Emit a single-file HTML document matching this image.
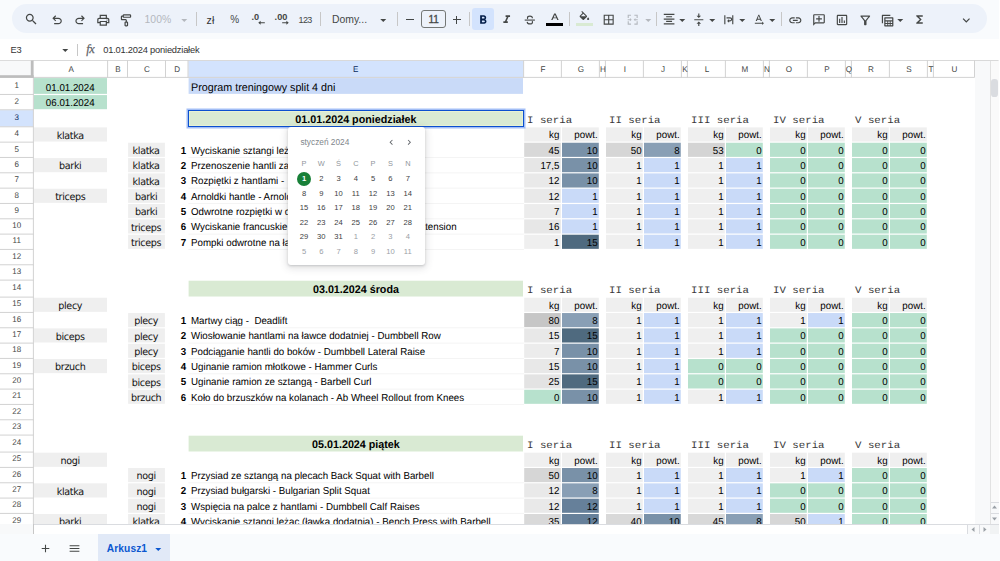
<!DOCTYPE html>
<html lang="pl"><head><meta charset="utf-8"><title>Program treningowy</title>
<style>
html,body{margin:0;padding:0}
body{width:1000px;height:561px;overflow:hidden;position:relative;background:#f9fbfd;font-family:"Liberation Sans",sans-serif;color:#000}
.abs{position:absolute}
.t{position:absolute;white-space:nowrap;overflow:visible;font-size:9.76px;color:#000;transform:skewX(0.05deg) scaleY(1.03);transform-origin:50% 78.9%}
.c{text-align:center}.r{text-align:right}.b{font-weight:bold}
.cm{font-family:"DejaVu Sans","Liberation Sans",sans-serif;font-size:9.6px;color:#111;letter-spacing:-0.35px}
.big{font-size:10.74px}
.hd{font-size:10.74px;font-weight:bold}
.mono{font-family:"Liberation Mono",monospace;font-size:10.74px;color:#3a3a3a;transform:skewX(0.05deg) scaleY(0.93);transform-origin:50% 78.9%}
.ch{font-size:8.1px;color:#444746;text-align:center}
.rh{font-size:8.0px;color:#444746;text-align:center}
.sel{color:#0b2a5c}
.gridsvg{position:absolute;left:0;top:0}
.ic{position:absolute}
#grid{position:absolute;left:0;top:0;width:1000px;height:524.4px;overflow:hidden}
#gridbg{position:absolute;left:0;top:60.5px;width:998.6px;height:464px;background:#fff}
.sep{position:absolute;width:1px;background:#c7c7c7;top:12px;height:14px}
.tb{position:absolute;font-size:10.2px;color:#444746;white-space:nowrap;line-height:14px;height:14px}
.cal{position:absolute;font-size:7.6px;text-align:center;width:18px;height:12px;line-height:12px;color:#3c4043}
</style></head><body>
<div class="abs" style="left:11.5px;top:4.2px;width:975.3px;height:29.2px;border-radius:14.6px;background:#edf2fa"></div>
<svg class="ic" style="left:23.70px;top:12.30px" width="14.60" height="14.60" viewBox="0 0 24 24" fill="#444746" color="#444746" ><path d="M15.5 14h-.79l-.28-.27C15.41 12.59 16 11.11 16 9.5 16 5.91 13.09 3 9.5 3S3 5.91 3 9.5 5.91 16 9.5 16c1.61 0 3.09-.59 4.23-1.57l.27.28v.79l5 4.99L20.49 19l-4.99-5zm-6 0C7.01 14 5 11.99 5 9.5S7.01 5 9.5 5 14 7.01 14 9.5 11.99 14 9.5 14z"/></svg>
<svg class="ic" style="left:49.50px;top:13.20px" width="14.20" height="14.20" viewBox="0 0 24 24" fill="#444746" color="#444746" ><path d="M7 19v-2h7.1q1.575 0 2.737-1Q18 15 18 13.5T16.837 11Q15.675 10 14.1 10H7.8l2.6 2.6L9 14 4 9l5-5 1.4 1.4L7.8 8h6.3q2.425 0 4.163 1.575Q20 11.15 20 13.5q0 2.350-1.737 3.925Q16.525 19 14.1 19Z"/></svg>
<svg class="ic" style="left:72.50px;top:13.20px" width="14.20" height="14.20" viewBox="0 0 24 24" fill="#444746" color="#444746" ><path d="M9.9 19q-2.425 0-4.163-1.575Q4 15.85 4 13.5q0-2.35 1.737-3.925Q7.475 8 9.9 8h6.3l-2.6-2.6L15 4l5 5-5 5-1.4-1.4 2.6-2.6H9.9q-1.575 0-2.738 1Q6 12 6 13.5T7.162 16q1.163 1 2.738 1H17v2Z"/></svg>
<svg class="ic" style="left:95.70px;top:12.50px" width="14.60" height="14.60" viewBox="0 0 24 24" fill="#444746" color="#444746" ><path d="M19 8h-1V3H6v5H5c-1.66 0-3 1.34-3 3v6h4v4h12v-4h4v-6c0-1.66-1.34-3-3-3zM8 5h8v3H8V5zm8 12v2H8v-4h8v2zm2-2v-2H6v2H4v-4c0-.55.45-1 1-1h14c.55 0 1 .45 1 1v4h-2z"/><circle cx="18" cy="11.5" r="1"/></svg>
<svg class="ic" style="left:118.70px;top:12.50px" width="14.60" height="14.60" viewBox="0 0 24 24" fill="#444746" color="#444746" ><g transform="translate(24,0) scale(-1,1)"><path d="M11 22q-.825 0-1.412-.587Q9 20.825 9 20v-4q0-.825.588-1.413Q10.175 14 11 14v-2q0-.825.588-1.412Q12.175 10 13 10h6V6h-1q0 .825-.587 1.413Q16.825 8 16 8H6q-.825 0-1.412-.587Q4 6.825 4 6V4q0-.825.588-1.413Q5.175 2 6 2h10q.825 0 1.413.587Q18 3.175 18 4h1q.825 0 1.413.588Q21 5.175 21 6v4q0 .825-.587 1.412Q19.825 12 19 12h-6v2q.825 0 1.413.587Q15 15.175 15 16v4q0 .825-.587 1.413Q13.825 22 13 22ZM6 6h10V4H6v2Zm5 14h2v-4h-2v4Z"/></g></svg>
<div class="tb" style="left:144.6px;top:13.2px;color:#b4b8be;font-size:10.4px">100%</div>
<svg class="ic" style="left:176.95px;top:12.55px" width="14.50" height="14.50" viewBox="0 0 24 24" fill="#b4b8be" color="#b4b8be" ><path d="M7 10l5 5 5-5z"/></svg>
<div class="sep" style="left:196.4px"></div>
<div class="tb" style="left:206.6px;top:12.8px;font-size:10.6px;color:#333">zł</div>
<div class="tb" style="left:230.3px;top:12.9px;font-size:10px">%</div>
<div class="tb" style="left:251.4px;top:10.2px;font-size:9.2px;font-weight:bold">.0</div>
<svg class="ic" style="left:257.5px;top:20.2px" width="7" height="5.5" viewBox="0 0 8 6"><path d="M0.3 3 L3 0.6 V2.400 H7.800 V3.600 H3 V5.400 Z" fill="#444746"/></svg>
<div class="tb" style="left:274.6px;top:10.2px;font-size:9.2px;font-weight:bold">.00</div>
<svg class="ic" style="left:281.5px;top:20.2px" width="7" height="5.5" viewBox="0 0 8 6"><path d="M7.700 3 L5 0.6 V2.400 H0.2 V3.600 H5 V5.400 Z" fill="#444746"/></svg>
<div class="tb" style="left:298.6px;top:13px;font-size:9px;letter-spacing:-0.65px">123</div>
<div class="sep" style="left:320px"></div>
<div class="tb" style="left:332px;top:12.9px;font-size:10.4px">Domy...</div>
<svg class="ic" style="left:376.45px;top:12.55px" width="14.50" height="14.50" viewBox="0 0 24 24" fill="#444746" color="#444746" ><path d="M7 10l5 5 5-5z"/></svg>
<div class="sep" style="left:397.4px"></div>
<div class="abs" style="left:406.3px;top:19.1px;width:7.4px;height:1.25px;background:#444746"></div>
<div class="abs" style="left:421.3px;top:10.3px;width:23px;height:16px;border:0.8px solid #747775;border-radius:3px;box-sizing:content-box"></div>
<div class="tb" style="left:421.2px;width:25px;text-align:center;top:12.9px;font-size:10px;-webkit-text-stroke:0.3px #444746">11</div>
<div class="abs" style="left:452.7px;top:19.1px;width:8.2px;height:1.25px;background:#444746"></div>
<div class="abs" style="left:456.05px;top:15.7px;width:1.25px;height:8.3px;background:#444746"></div>
<div class="sep" style="left:468.6px"></div>
<div class="abs" style="left:472.2px;top:7.8px;width:21.8px;height:21.9px;border-radius:3px;background:#d3e3fd"></div>
<svg class="ic" style="left:475.90px;top:12.70px" width="14.20" height="14.20" viewBox="0 0 24 24" fill="#041e49" color="#041e49" ><path d="M15.6 10.79c.97-.67 1.65-1.77 1.65-2.79 0-2.26-1.75-4-4-4H7v14h7.04c2.09 0 3.71-1.7 3.71-3.79 0-1.52-.86-2.82-2.15-3.42zM10 6.5h3c.83 0 1.5.67 1.5 1.5s-.67 1.5-1.5 1.5h-3v-3zm3.5 9H10v-3h3.500c.83 0 1.5.67 1.5 1.5s-.67 1.5-1.5 1.5z"/></svg>
<svg class="ic" style="left:499.80px;top:13.10px" width="13.40" height="13.40" viewBox="0 0 24 24" fill="#444746" color="#444746" ><path d="M10 4v3h2.21l-3.42 8H6v3h8v-3h-2.21l3.42-8H18V4z"/></svg>
<svg class="ic" style="left:523.00px;top:13.00px" width="13.60" height="13.60" viewBox="0 0 24 24" fill="#444746" color="#444746" ><g fill="none" stroke="currentColor" stroke-width="2"><path d="M3 12.500H21"/><path d="M16.600 9.200C16.600 6.900 14.900 5.600 12.200 5.600 9.500 5.600 7.900 6.900 7.900 8.700 7.900 9.400 8.100 9.900 8.500 10.400"/><path d="M7.400 15.600C7.600 17.900 9.400 19.300 12.200 19.300 15 19.300 16.700 18 16.700 16.200 16.700 15.500 16.500 15 16.100 14.500"/></g></svg>
<svg class="ic" style="left:547.60px;top:12.30px" width="13.80" height="11.40" viewBox="0 0 24 24" fill="#444746" color="#444746" preserveAspectRatio="none" ><path d="M5.49 17h2.42l1.27-3.58h5.65L16.090 17h2.42L13.25 3h-2.5L5.49 17zm4.42-5.61l2.03-5.79h.12l2.03 5.79H9.91z"/></svg>
<div class="abs" style="left:545.8px;top:23.2px;width:17.2px;height:2.7px;background:#000"></div>
<div class="sep" style="left:568.6px"></div>
<svg class="ic" style="left:578.20px;top:11.20px" width="12.80" height="12.80" viewBox="0 0 24 24" fill="#444746" color="#444746" ><path d="M16.56 8.94L7.62 0 6.21 1.41l2.38 2.38-5.15 5.15c-.59.59-.59 1.54 0 2.12l5.5 5.5c.29.29.68.44 1.06.44s.77-.15 1.060-.44l5.5-5.5c.59-.58.59-1.53 0-2.12zM5.21 10L10 5.21 14.79 10H5.21zM19 11.5s-2 2.17-2 3.5c0 1.1.9 2 2 2s2-.9 2-2c0-1.33-2-3.5-2-3.500z"/></svg>
<div class="abs" style="left:575.8px;top:23.2px;width:17px;height:2.7px;background:#d9ead3"></div>
<svg class="ic" style="left:602.10px;top:13.10px" width="13.40" height="13.40" viewBox="0 0 24 24" fill="#444746" color="#444746" ><path d="M3 3v18h18V3H3zm8 16H5v-6h6v6zm0-8H5V5h6v6zm8 8h-6v-6h6v6zm0-8h-6V5h6v6z"/></svg>
<svg class="ic" style="left:626.30px;top:13.10px" width="13.40" height="13.40" viewBox="0 0 24 24" fill="#b4b8be" color="#b4b8be" ><path d="M3 3h6v2H5v4H3V3zm12 0h6v6h-2V5h-4V3zM3 15h2v4h4v2H3v-6zm16 0h2v6h-6v-2h4v-4zM3 11h4.200V9l3 3-3 3v-2H3v-2zm18 0h-4.200V9l-3 3 3 3v-2H21v-2z"/></svg>
<svg class="ic" style="left:640.95px;top:12.55px" width="14.50" height="14.50" viewBox="0 0 24 24" fill="#b4b8be" color="#b4b8be" ><path d="M7 10l5 5 5-5z"/></svg>
<div class="sep" style="left:655.6px"></div>
<svg class="ic" style="left:661.80px;top:12.40px" width="14.20" height="14.20" viewBox="0 0 24 24" fill="#444746" color="#444746" ><path d="M7 15v2h10v-2H7zm-4 6h18v-2H3v2zm0-8h18v-2H3v2zm4-6v2h10V7H7zM3 3v2h18V3H3z"/></svg>
<svg class="ic" style="left:674.55px;top:12.55px" width="14.50" height="14.50" viewBox="0 0 24 24" fill="#444746" color="#444746" ><path d="M7 10l5 5 5-5z"/></svg>
<svg class="ic" style="left:691.60px;top:13.00px" width="13.60" height="13.60" viewBox="0 0 24 24" fill="#444746" color="#444746" ><path d="M8 19h3v4h2v-4h3l-4-4-4 4zm8-14h-3V1h-2v4H8l4 4 4-4zM4 11v2h16v-2H4z"/></svg>
<svg class="ic" style="left:704.55px;top:12.55px" width="14.50" height="14.50" viewBox="0 0 24 24" fill="#444746" color="#444746" ><path d="M7 10l5 5 5-5z"/></svg>
<svg class="ic" style="left:721.90px;top:13.00px" width="13.60" height="13.60" viewBox="0 0 24 24" fill="#444746" color="#444746" ><path d="M4 4h2v16H4zM18 4h2v16h-2zM8 7.500h6.250a3.750 3.750 0 0 1 0 7.500H12.500v2.200l-3.400-3.200 3.400-3.200V13h1.750a1.750 1.750 0 0 0 0-3.500H8z"/></svg>
<svg class="ic" style="left:734.55px;top:12.55px" width="14.50" height="14.50" viewBox="0 0 24 24" fill="#444746" color="#444746" ><path d="M7 10l5 5 5-5z"/></svg>
<svg class="ic" style="left:751.90px;top:13.00px" width="13.60" height="13.60" viewBox="0 0 24 24" fill="#444746" color="#444746" ><path d="M21 18l-3-3v2H5v2h13v2l3-3zM9.5 11.8h5l.9 2.2h2.1L12.75 3h-1.500L6.5 14h2.100l.9-2.200zM12 4.980L13.870 10h-3.740L12 4.980z"/></svg>
<svg class="ic" style="left:764.75px;top:12.55px" width="14.50" height="14.50" viewBox="0 0 24 24" fill="#444746" color="#444746" ><path d="M7 10l5 5 5-5z"/></svg>
<div class="sep" style="left:780.6px"></div>
<svg class="ic" style="left:787.70px;top:12.50px" width="14.60" height="14.60" viewBox="0 0 24 24" fill="#444746" color="#444746" ><path d="M3.900 12c0-1.710 1.390-3.100 3.100-3.100h4V7H7c-2.760 0-5 2.240-5 5s2.240 5 5 5h4v-1.900H7c-1.710 0-3.100-1.390-3.100-3.100zM8 13h8v-2H8v2zm9-6h-4v1.900h4c1.710 0 3.100 1.390 3.100 3.100s-1.390 3.100-3.100 3.100h-4V17h4c2.760 0 5-2.240 5-5s-2.240-5-5-5z"/></svg>
<svg class="ic" style="left:811.70px;top:13.20px" width="14.00" height="14.00" viewBox="0 0 24 24" fill="#444746" color="#444746" ><g transform="translate(24,0) scale(-1,1)"><path d="M22 4c0-1.100-.9-2-2-2H4c-1.100 0-2 .9-2 2v12c0 1.100.9 2 2 2h14l4 4V4zm-2 13.170L18.830 16H4V4h16v13.170zM13 5h-2v4H7v2h4v4h2v-4h4V9h-4z"/></g></svg>
<svg class="ic" style="left:835.20px;top:12.80px" width="14.00" height="14.00" viewBox="0 0 24 24" fill="#444746" color="#444746" ><path d="M9 17H7v-7h2v7zm4 0h-2V7h2v10zm4 0h-2v-4h2v4zm2 2H5V5h14v14zm0-16H5c-1.100 0-2 .9-2 2v14c0 1.100.9 2 2 2h14c1.100 0 2-.9 2-2V5c0-1.100-.9-2-2-2z"/></svg>
<svg class="ic" style="left:858.00px;top:12.50px" width="14.60" height="14.60" viewBox="0 0 24 24" fill="#444746" color="#444746" ><path d="M7 6h10l-5.010 6.300L7 6zm-2.750-.39C6.270 8.200 10 13 10 13v6c0 .55.45 1 1 1h2c.55 0 1-.45 1-1v-6s3.720-4.800 5.740-7.390A.998.998 0 0 0 18.950 4H5.040c-.83 0-1.300.95-.79 1.610z"/></svg>
<svg class="ic" style="left:879.90px;top:12.50px" width="14.60" height="14.60" viewBox="0 0 24 24" fill="#444746" color="#444746" ><path d="M8 7h13c.55 0 1 .45 1 1v13c0 .55-.45 1-1 1H8c-.55 0-1-.45-1-1V8c0-.55.45-1 1-1zm1 2v3h11V9H9zm0 5v2.500h3V14H9zm4.500 0v2.500h2.500V14h-2.500zm4 0v2.500H20V14h-2.500zM9 18v2h3v-2H9zm4.500 0v2h2.500v-2h-2.500zm4 0v2H20v-2h-2.500z"/><path d="M4 3h13v2H5v12H3V4c0-.55.45-1 1-1z"/></svg>
<svg class="ic" style="left:893.25px;top:12.55px" width="14.50" height="14.50" viewBox="0 0 24 24" fill="#444746" color="#444746" ><path d="M7 10l5 5 5-5z"/></svg>
<svg class="ic" style="left:913.00px;top:13.30px" width="13.00" height="13.00" viewBox="0 0 24 24" fill="#444746" color="#444746" ><path d="M18 4H6v2l6.500 6L6 18v2h12v-3h-7l5-5-5-5h7z"/></svg>
<svg class="ic" style="left:958.90px;top:12.50px" width="14.60" height="14.60" viewBox="0 0 24 24" fill="#444746" color="#444746" ><path d="M16.590 8.590L12 13.170 7.410 8.590 6 10l6 6 6-6z"/></svg>
<div class="abs" style="left:0;top:39.4px;width:1000px;height:21.2px;background:#fff"></div>
<div class="tb" style="left:10.4px;top:42.8px;font-size:9.3px;color:#333">E3</div>
<svg class="ic" style="left:58.35px;top:42.55px" width="14.50" height="14.50" viewBox="0 0 24 24" fill="#444746" color="#444746" ><path d="M7 10l5 5 5-5z"/></svg>
<div class="abs" style="left:77.2px;top:44px;width:1px;height:12px;background:#c7c7c7"></div>
<div class="tb" style="left:86.2px;top:42.4px;font-size:12.4px;font-style:italic;font-family:'Liberation Serif',serif;color:#5f6368;letter-spacing:-0.5px;-webkit-text-stroke:0.25px #5f6368">fx</div>
<div class="tb" style="left:103.2px;top:42.8px;font-size:9.3px;color:#333;letter-spacing:-0.2px">01.01.2024 poniedziałek</div>
<div id="gridbg"></div>
<div id="grid">
<svg class="gridsvg" width="1000" height="561" viewBox="0 0 1000 561"><rect x="34.00" y="78.08" width="73.00" height="15.80" fill="#b7e1cd" /><rect x="34.00" y="95.08" width="73.00" height="14.13" fill="#b7e1cd" /><rect x="188.60" y="78.08" width="334.40" height="15.80" fill="#c9daf8" /><rect x="188.60" y="110.41" width="334.40" height="15.80" fill="#d9ead3" /><rect x="188.60" y="280.71" width="334.40" height="15.80" fill="#d9ead3" /><rect x="188.60" y="435.69" width="334.40" height="15.80" fill="#d9ead3" /><rect x="34.00" y="127.41" width="73.00" height="14.13" fill="#efefef" /><rect x="34.00" y="158.07" width="73.00" height="14.13" fill="#efefef" /><rect x="34.00" y="188.73" width="73.00" height="14.13" fill="#efefef" /><rect x="34.00" y="297.72" width="73.00" height="14.13" fill="#efefef" /><rect x="34.00" y="328.38" width="73.00" height="14.13" fill="#efefef" /><rect x="34.00" y="359.04" width="73.00" height="14.13" fill="#efefef" /><rect x="34.00" y="452.69" width="73.00" height="14.13" fill="#efefef" /><rect x="34.00" y="483.35" width="73.00" height="14.13" fill="#efefef" /><rect x="34.00" y="514.01" width="73.00" height="14.13" fill="#efefef" /><rect x="128.10" y="142.74" width="36.80" height="14.13" fill="#efefef" /><rect x="128.10" y="158.07" width="36.80" height="14.13" fill="#efefef" /><rect x="128.10" y="173.40" width="36.80" height="14.13" fill="#efefef" /><rect x="128.10" y="188.73" width="36.80" height="14.13" fill="#efefef" /><rect x="128.10" y="204.06" width="36.80" height="14.13" fill="#efefef" /><rect x="128.10" y="219.39" width="36.80" height="14.13" fill="#efefef" /><rect x="128.10" y="234.72" width="36.80" height="14.13" fill="#efefef" /><rect x="128.10" y="313.05" width="36.80" height="14.13" fill="#efefef" /><rect x="128.10" y="328.38" width="36.80" height="14.13" fill="#efefef" /><rect x="128.10" y="343.71" width="36.80" height="14.13" fill="#efefef" /><rect x="128.10" y="359.04" width="36.80" height="14.13" fill="#efefef" /><rect x="128.10" y="374.37" width="36.80" height="14.13" fill="#efefef" /><rect x="128.10" y="389.70" width="36.80" height="14.13" fill="#efefef" /><rect x="128.10" y="468.02" width="36.80" height="14.13" fill="#efefef" /><rect x="128.10" y="483.35" width="36.80" height="14.13" fill="#efefef" /><rect x="128.10" y="498.68" width="36.80" height="14.13" fill="#efefef" /><rect x="128.10" y="514.01" width="36.80" height="14.13" fill="#efefef" /><line x1="188.37" y1="157.47" x2="523.97" y2="157.47" stroke="#f1f1f1" stroke-width="0.8"/><line x1="188.37" y1="172.80" x2="523.97" y2="172.80" stroke="#f1f1f1" stroke-width="0.8"/><line x1="188.37" y1="188.13" x2="523.97" y2="188.13" stroke="#f1f1f1" stroke-width="0.8"/><line x1="188.37" y1="203.46" x2="523.97" y2="203.46" stroke="#f1f1f1" stroke-width="0.8"/><line x1="188.37" y1="218.79" x2="523.97" y2="218.79" stroke="#f1f1f1" stroke-width="0.8"/><line x1="188.37" y1="234.12" x2="523.97" y2="234.12" stroke="#f1f1f1" stroke-width="0.8"/><line x1="188.37" y1="249.45" x2="523.97" y2="249.45" stroke="#f1f1f1" stroke-width="0.8"/><line x1="188.37" y1="327.78" x2="523.97" y2="327.78" stroke="#f1f1f1" stroke-width="0.8"/><line x1="188.37" y1="343.11" x2="523.97" y2="343.11" stroke="#f1f1f1" stroke-width="0.8"/><line x1="188.37" y1="358.44" x2="523.97" y2="358.44" stroke="#f1f1f1" stroke-width="0.8"/><line x1="188.37" y1="373.77" x2="523.97" y2="373.77" stroke="#f1f1f1" stroke-width="0.8"/><line x1="188.37" y1="389.10" x2="523.97" y2="389.10" stroke="#f1f1f1" stroke-width="0.8"/><line x1="188.37" y1="404.43" x2="523.97" y2="404.43" stroke="#f1f1f1" stroke-width="0.8"/><line x1="188.37" y1="482.75" x2="523.97" y2="482.75" stroke="#f1f1f1" stroke-width="0.8"/><line x1="188.37" y1="498.08" x2="523.97" y2="498.08" stroke="#f1f1f1" stroke-width="0.8"/><line x1="188.37" y1="513.41" x2="523.97" y2="513.41" stroke="#f1f1f1" stroke-width="0.8"/><line x1="188.37" y1="528.74" x2="523.97" y2="528.74" stroke="#f1f1f1" stroke-width="0.8"/><rect x="524.20" y="127.41" width="36.60" height="14.13" fill="#efefef" /><rect x="562.00" y="127.41" width="36.80" height="14.13" fill="#efefef" /><rect x="606.00" y="127.41" width="36.80" height="14.13" fill="#efefef" /><rect x="644.00" y="127.41" width="36.80" height="14.13" fill="#efefef" /><rect x="688.00" y="127.41" width="36.80" height="14.13" fill="#efefef" /><rect x="726.00" y="127.41" width="36.80" height="14.13" fill="#efefef" /><rect x="770.00" y="127.41" width="36.80" height="14.13" fill="#efefef" /><rect x="808.00" y="127.41" width="36.80" height="14.13" fill="#efefef" /><rect x="852.00" y="127.41" width="36.80" height="14.13" fill="#efefef" /><rect x="890.00" y="127.41" width="36.80" height="14.13" fill="#efefef" /><rect x="524.20" y="297.72" width="36.60" height="14.13" fill="#efefef" /><rect x="562.00" y="297.72" width="36.80" height="14.13" fill="#efefef" /><rect x="606.00" y="297.72" width="36.80" height="14.13" fill="#efefef" /><rect x="644.00" y="297.72" width="36.80" height="14.13" fill="#efefef" /><rect x="688.00" y="297.72" width="36.80" height="14.13" fill="#efefef" /><rect x="726.00" y="297.72" width="36.80" height="14.13" fill="#efefef" /><rect x="770.00" y="297.72" width="36.80" height="14.13" fill="#efefef" /><rect x="808.00" y="297.72" width="36.80" height="14.13" fill="#efefef" /><rect x="852.00" y="297.72" width="36.80" height="14.13" fill="#efefef" /><rect x="890.00" y="297.72" width="36.80" height="14.13" fill="#efefef" /><rect x="524.20" y="452.69" width="36.60" height="14.13" fill="#efefef" /><rect x="562.00" y="452.69" width="36.80" height="14.13" fill="#efefef" /><rect x="606.00" y="452.69" width="36.80" height="14.13" fill="#efefef" /><rect x="644.00" y="452.69" width="36.80" height="14.13" fill="#efefef" /><rect x="688.00" y="452.69" width="36.80" height="14.13" fill="#efefef" /><rect x="726.00" y="452.69" width="36.80" height="14.13" fill="#efefef" /><rect x="770.00" y="452.69" width="36.80" height="14.13" fill="#efefef" /><rect x="808.00" y="452.69" width="36.80" height="14.13" fill="#efefef" /><rect x="852.00" y="452.69" width="36.80" height="14.13" fill="#efefef" /><rect x="890.00" y="452.69" width="36.80" height="14.13" fill="#efefef" /><rect x="524.20" y="142.74" width="36.60" height="14.13" fill="#d8d8d8" /><rect x="562.00" y="142.74" width="36.80" height="14.13" fill="#7991a8" /><rect x="606.00" y="142.74" width="36.80" height="14.13" fill="#d6d6d6" /><rect x="644.00" y="142.74" width="36.80" height="14.13" fill="#899fb5" /><rect x="688.00" y="142.74" width="36.80" height="14.13" fill="#d4d4d4" /><rect x="726.00" y="142.74" width="36.80" height="14.13" fill="#b7e1cd" /><rect x="770.00" y="142.74" width="36.80" height="14.13" fill="#b7e1cd" /><rect x="808.00" y="142.74" width="36.80" height="14.13" fill="#b7e1cd" /><rect x="852.00" y="142.74" width="36.80" height="14.13" fill="#b7e1cd" /><rect x="890.00" y="142.74" width="36.80" height="14.13" fill="#b7e1cd" /><rect x="524.20" y="158.07" width="36.60" height="14.13" fill="#e6e6e6" /><rect x="562.00" y="158.07" width="36.80" height="14.13" fill="#7991a8" /><rect x="606.00" y="158.07" width="36.80" height="14.13" fill="#efefef" /><rect x="644.00" y="158.07" width="36.80" height="14.13" fill="#c9daf8" /><rect x="688.00" y="158.07" width="36.80" height="14.13" fill="#efefef" /><rect x="726.00" y="158.07" width="36.80" height="14.13" fill="#c9daf8" /><rect x="770.00" y="158.07" width="36.80" height="14.13" fill="#b7e1cd" /><rect x="808.00" y="158.07" width="36.80" height="14.13" fill="#b7e1cd" /><rect x="852.00" y="158.07" width="36.80" height="14.13" fill="#b7e1cd" /><rect x="890.00" y="158.07" width="36.80" height="14.13" fill="#b7e1cd" /><rect x="524.20" y="173.40" width="36.60" height="14.13" fill="#e9e9e9" /><rect x="562.00" y="173.40" width="36.80" height="14.13" fill="#7991a8" /><rect x="606.00" y="173.40" width="36.80" height="14.13" fill="#efefef" /><rect x="644.00" y="173.40" width="36.80" height="14.13" fill="#c9daf8" /><rect x="688.00" y="173.40" width="36.80" height="14.13" fill="#efefef" /><rect x="726.00" y="173.40" width="36.80" height="14.13" fill="#c9daf8" /><rect x="770.00" y="173.40" width="36.80" height="14.13" fill="#b7e1cd" /><rect x="808.00" y="173.40" width="36.80" height="14.13" fill="#b7e1cd" /><rect x="852.00" y="173.40" width="36.80" height="14.13" fill="#b7e1cd" /><rect x="890.00" y="173.40" width="36.80" height="14.13" fill="#b7e1cd" /><rect x="524.20" y="188.73" width="36.60" height="14.13" fill="#e9e9e9" /><rect x="562.00" y="188.73" width="36.80" height="14.13" fill="#c9daf8" /><rect x="606.00" y="188.73" width="36.80" height="14.13" fill="#efefef" /><rect x="644.00" y="188.73" width="36.80" height="14.13" fill="#c9daf8" /><rect x="688.00" y="188.73" width="36.80" height="14.13" fill="#efefef" /><rect x="726.00" y="188.73" width="36.80" height="14.13" fill="#c9daf8" /><rect x="770.00" y="188.73" width="36.80" height="14.13" fill="#b7e1cd" /><rect x="808.00" y="188.73" width="36.80" height="14.13" fill="#b7e1cd" /><rect x="852.00" y="188.73" width="36.80" height="14.13" fill="#b7e1cd" /><rect x="890.00" y="188.73" width="36.80" height="14.13" fill="#b7e1cd" /><rect x="524.20" y="204.06" width="36.60" height="14.13" fill="#ececec" /><rect x="562.00" y="204.06" width="36.80" height="14.13" fill="#c9daf8" /><rect x="606.00" y="204.06" width="36.80" height="14.13" fill="#efefef" /><rect x="644.00" y="204.06" width="36.80" height="14.13" fill="#c9daf8" /><rect x="688.00" y="204.06" width="36.80" height="14.13" fill="#efefef" /><rect x="726.00" y="204.06" width="36.80" height="14.13" fill="#c9daf8" /><rect x="770.00" y="204.06" width="36.80" height="14.13" fill="#b7e1cd" /><rect x="808.00" y="204.06" width="36.80" height="14.13" fill="#b7e1cd" /><rect x="852.00" y="204.06" width="36.80" height="14.13" fill="#b7e1cd" /><rect x="890.00" y="204.06" width="36.80" height="14.13" fill="#b7e1cd" /><rect x="524.20" y="219.39" width="36.60" height="14.13" fill="#e7e7e7" /><rect x="562.00" y="219.39" width="36.80" height="14.13" fill="#c9daf8" /><rect x="606.00" y="219.39" width="36.80" height="14.13" fill="#efefef" /><rect x="644.00" y="219.39" width="36.80" height="14.13" fill="#c9daf8" /><rect x="688.00" y="219.39" width="36.80" height="14.13" fill="#efefef" /><rect x="726.00" y="219.39" width="36.80" height="14.13" fill="#c9daf8" /><rect x="770.00" y="219.39" width="36.80" height="14.13" fill="#b7e1cd" /><rect x="808.00" y="219.39" width="36.80" height="14.13" fill="#b7e1cd" /><rect x="852.00" y="219.39" width="36.80" height="14.13" fill="#b7e1cd" /><rect x="890.00" y="219.39" width="36.80" height="14.13" fill="#b7e1cd" /><rect x="524.20" y="234.72" width="36.60" height="14.13" fill="#efefef" /><rect x="562.00" y="234.72" width="36.80" height="14.13" fill="#4f6a7f" /><rect x="606.00" y="234.72" width="36.80" height="14.13" fill="#efefef" /><rect x="644.00" y="234.72" width="36.80" height="14.13" fill="#c9daf8" /><rect x="688.00" y="234.72" width="36.80" height="14.13" fill="#efefef" /><rect x="726.00" y="234.72" width="36.80" height="14.13" fill="#c9daf8" /><rect x="770.00" y="234.72" width="36.80" height="14.13" fill="#b7e1cd" /><rect x="808.00" y="234.72" width="36.80" height="14.13" fill="#b7e1cd" /><rect x="852.00" y="234.72" width="36.80" height="14.13" fill="#b7e1cd" /><rect x="890.00" y="234.72" width="36.80" height="14.13" fill="#b7e1cd" /><rect x="524.20" y="313.05" width="36.60" height="14.13" fill="#c6c6c6" /><rect x="562.00" y="313.05" width="36.80" height="14.13" fill="#899fb5" /><rect x="606.00" y="313.05" width="36.80" height="14.13" fill="#efefef" /><rect x="644.00" y="313.05" width="36.80" height="14.13" fill="#c9daf8" /><rect x="688.00" y="313.05" width="36.80" height="14.13" fill="#efefef" /><rect x="726.00" y="313.05" width="36.80" height="14.13" fill="#c9daf8" /><rect x="770.00" y="313.05" width="36.80" height="14.13" fill="#efefef" /><rect x="808.00" y="313.05" width="36.80" height="14.13" fill="#c9daf8" /><rect x="852.00" y="313.05" width="36.80" height="14.13" fill="#b7e1cd" /><rect x="890.00" y="313.05" width="36.80" height="14.13" fill="#b7e1cd" /><rect x="524.20" y="328.38" width="36.60" height="14.13" fill="#e8e8e8" /><rect x="562.00" y="328.38" width="36.80" height="14.13" fill="#4f6a7f" /><rect x="606.00" y="328.38" width="36.80" height="14.13" fill="#efefef" /><rect x="644.00" y="328.38" width="36.80" height="14.13" fill="#c9daf8" /><rect x="688.00" y="328.38" width="36.80" height="14.13" fill="#efefef" /><rect x="726.00" y="328.38" width="36.80" height="14.13" fill="#c9daf8" /><rect x="770.00" y="328.38" width="36.80" height="14.13" fill="#b7e1cd" /><rect x="808.00" y="328.38" width="36.80" height="14.13" fill="#b7e1cd" /><rect x="852.00" y="328.38" width="36.80" height="14.13" fill="#b7e1cd" /><rect x="890.00" y="328.38" width="36.80" height="14.13" fill="#b7e1cd" /><rect x="524.20" y="343.71" width="36.60" height="14.13" fill="#ececec" /><rect x="562.00" y="343.71" width="36.80" height="14.13" fill="#7991a8" /><rect x="606.00" y="343.71" width="36.80" height="14.13" fill="#efefef" /><rect x="644.00" y="343.71" width="36.80" height="14.13" fill="#c9daf8" /><rect x="688.00" y="343.71" width="36.80" height="14.13" fill="#efefef" /><rect x="726.00" y="343.71" width="36.80" height="14.13" fill="#c9daf8" /><rect x="770.00" y="343.71" width="36.80" height="14.13" fill="#b7e1cd" /><rect x="808.00" y="343.71" width="36.80" height="14.13" fill="#b7e1cd" /><rect x="852.00" y="343.71" width="36.80" height="14.13" fill="#b7e1cd" /><rect x="890.00" y="343.71" width="36.80" height="14.13" fill="#b7e1cd" /><rect x="524.20" y="359.04" width="36.60" height="14.13" fill="#e8e8e8" /><rect x="562.00" y="359.04" width="36.80" height="14.13" fill="#7991a8" /><rect x="606.00" y="359.04" width="36.80" height="14.13" fill="#efefef" /><rect x="644.00" y="359.04" width="36.80" height="14.13" fill="#c9daf8" /><rect x="688.00" y="359.04" width="36.80" height="14.13" fill="#b7e1cd" /><rect x="726.00" y="359.04" width="36.80" height="14.13" fill="#b7e1cd" /><rect x="770.00" y="359.04" width="36.80" height="14.13" fill="#b7e1cd" /><rect x="808.00" y="359.04" width="36.80" height="14.13" fill="#b7e1cd" /><rect x="852.00" y="359.04" width="36.80" height="14.13" fill="#b7e1cd" /><rect x="890.00" y="359.04" width="36.80" height="14.13" fill="#b7e1cd" /><rect x="524.20" y="374.37" width="36.60" height="14.13" fill="#e3e3e3" /><rect x="562.00" y="374.37" width="36.80" height="14.13" fill="#4f6a7f" /><rect x="606.00" y="374.37" width="36.80" height="14.13" fill="#efefef" /><rect x="644.00" y="374.37" width="36.80" height="14.13" fill="#c9daf8" /><rect x="688.00" y="374.37" width="36.80" height="14.13" fill="#b7e1cd" /><rect x="726.00" y="374.37" width="36.80" height="14.13" fill="#b7e1cd" /><rect x="770.00" y="374.37" width="36.80" height="14.13" fill="#b7e1cd" /><rect x="808.00" y="374.37" width="36.80" height="14.13" fill="#b7e1cd" /><rect x="852.00" y="374.37" width="36.80" height="14.13" fill="#b7e1cd" /><rect x="890.00" y="374.37" width="36.80" height="14.13" fill="#b7e1cd" /><rect x="524.20" y="389.70" width="36.60" height="14.13" fill="#b7e1cd" /><rect x="562.00" y="389.70" width="36.80" height="14.13" fill="#7991a8" /><rect x="606.00" y="389.70" width="36.80" height="14.13" fill="#efefef" /><rect x="644.00" y="389.70" width="36.80" height="14.13" fill="#c9daf8" /><rect x="688.00" y="389.70" width="36.80" height="14.13" fill="#efefef" /><rect x="726.00" y="389.70" width="36.80" height="14.13" fill="#c9daf8" /><rect x="770.00" y="389.70" width="36.80" height="14.13" fill="#b7e1cd" /><rect x="808.00" y="389.70" width="36.80" height="14.13" fill="#b7e1cd" /><rect x="852.00" y="389.70" width="36.80" height="14.13" fill="#b7e1cd" /><rect x="890.00" y="389.70" width="36.80" height="14.13" fill="#b7e1cd" /><rect x="524.20" y="468.02" width="36.60" height="14.13" fill="#d6d6d6" /><rect x="562.00" y="468.02" width="36.80" height="14.13" fill="#7991a8" /><rect x="606.00" y="468.02" width="36.80" height="14.13" fill="#efefef" /><rect x="644.00" y="468.02" width="36.80" height="14.13" fill="#c9daf8" /><rect x="688.00" y="468.02" width="36.80" height="14.13" fill="#efefef" /><rect x="726.00" y="468.02" width="36.80" height="14.13" fill="#c9daf8" /><rect x="770.00" y="468.02" width="36.80" height="14.13" fill="#efefef" /><rect x="808.00" y="468.02" width="36.80" height="14.13" fill="#c9daf8" /><rect x="852.00" y="468.02" width="36.80" height="14.13" fill="#b7e1cd" /><rect x="890.00" y="468.02" width="36.80" height="14.13" fill="#b7e1cd" /><rect x="524.20" y="483.35" width="36.60" height="14.13" fill="#e9e9e9" /><rect x="562.00" y="483.35" width="36.80" height="14.13" fill="#899fb5" /><rect x="606.00" y="483.35" width="36.80" height="14.13" fill="#efefef" /><rect x="644.00" y="483.35" width="36.80" height="14.13" fill="#c9daf8" /><rect x="688.00" y="483.35" width="36.80" height="14.13" fill="#efefef" /><rect x="726.00" y="483.35" width="36.80" height="14.13" fill="#c9daf8" /><rect x="770.00" y="483.35" width="36.80" height="14.13" fill="#b7e1cd" /><rect x="808.00" y="483.35" width="36.80" height="14.13" fill="#b7e1cd" /><rect x="852.00" y="483.35" width="36.80" height="14.13" fill="#b7e1cd" /><rect x="890.00" y="483.35" width="36.80" height="14.13" fill="#b7e1cd" /><rect x="524.20" y="498.68" width="36.60" height="14.13" fill="#e9e9e9" /><rect x="562.00" y="498.68" width="36.80" height="14.13" fill="#66809a" /><rect x="606.00" y="498.68" width="36.80" height="14.13" fill="#efefef" /><rect x="644.00" y="498.68" width="36.80" height="14.13" fill="#c9daf8" /><rect x="688.00" y="498.68" width="36.80" height="14.13" fill="#efefef" /><rect x="726.00" y="498.68" width="36.80" height="14.13" fill="#c9daf8" /><rect x="770.00" y="498.68" width="36.80" height="14.13" fill="#b7e1cd" /><rect x="808.00" y="498.68" width="36.80" height="14.13" fill="#b7e1cd" /><rect x="852.00" y="498.68" width="36.80" height="14.13" fill="#b7e1cd" /><rect x="890.00" y="498.68" width="36.80" height="14.13" fill="#b7e1cd" /><rect x="524.20" y="514.01" width="36.60" height="14.13" fill="#d9d9d9" /><rect x="562.00" y="514.01" width="36.80" height="14.13" fill="#66809a" /><rect x="606.00" y="514.01" width="36.80" height="14.13" fill="#d9d9d9" /><rect x="644.00" y="514.01" width="36.80" height="14.13" fill="#7991a8" /><rect x="688.00" y="514.01" width="36.80" height="14.13" fill="#d8d8d8" /><rect x="726.00" y="514.01" width="36.80" height="14.13" fill="#899fb5" /><rect x="770.00" y="514.01" width="36.80" height="14.13" fill="#d6d6d6" /><rect x="808.00" y="514.01" width="36.80" height="14.13" fill="#c9daf8" /><rect x="852.00" y="514.01" width="36.80" height="14.13" fill="#b7e1cd" /><rect x="890.00" y="514.01" width="36.80" height="14.13" fill="#b7e1cd" /></svg>
<div class="t cm c" style="left:35.97px;top:129.59px;width:68.50px;height:11.52px;line-height:11.52px;">klatka</div>
<div class="t cm c" style="left:35.97px;top:160.25px;width:68.50px;height:11.52px;line-height:11.52px;">barki</div>
<div class="t cm c" style="left:35.97px;top:190.91px;width:68.50px;height:11.52px;line-height:11.52px;">triceps</div>
<div class="t cm c" style="left:35.97px;top:299.89px;width:68.50px;height:11.52px;line-height:11.52px;">plecy</div>
<div class="t cm c" style="left:35.97px;top:330.55px;width:68.50px;height:11.52px;line-height:11.52px;">biceps</div>
<div class="t cm c" style="left:35.97px;top:361.21px;width:68.50px;height:11.52px;line-height:11.52px;">brzuch</div>
<div class="t cm c" style="left:35.97px;top:454.87px;width:68.50px;height:11.52px;line-height:11.52px;">nogi</div>
<div class="t cm c" style="left:35.97px;top:485.53px;width:68.50px;height:11.52px;line-height:11.52px;">klatka</div>
<div class="t cm c" style="left:35.97px;top:516.19px;width:68.50px;height:11.52px;line-height:11.52px;">barki</div>
<div class="t cm c" style="left:130.07px;top:144.92px;width:32.30px;height:11.52px;line-height:11.52px;">klatka</div>
<div class="t cm c" style="left:130.07px;top:160.25px;width:32.30px;height:11.52px;line-height:11.52px;">klatka</div>
<div class="t cm c" style="left:130.07px;top:175.58px;width:32.30px;height:11.52px;line-height:11.52px;">klatka</div>
<div class="t cm c" style="left:130.07px;top:190.91px;width:32.30px;height:11.52px;line-height:11.52px;">barki</div>
<div class="t cm c" style="left:130.07px;top:206.24px;width:32.30px;height:11.52px;line-height:11.52px;">barki</div>
<div class="t cm c" style="left:130.07px;top:221.57px;width:32.30px;height:11.52px;line-height:11.52px;">triceps</div>
<div class="t cm c" style="left:130.07px;top:236.90px;width:32.30px;height:11.52px;line-height:11.52px;">triceps</div>
<div class="t cm c" style="left:130.07px;top:315.22px;width:32.30px;height:11.52px;line-height:11.52px;">plecy</div>
<div class="t cm c" style="left:130.07px;top:330.55px;width:32.30px;height:11.52px;line-height:11.52px;">plecy</div>
<div class="t cm c" style="left:130.07px;top:345.88px;width:32.30px;height:11.52px;line-height:11.52px;">plecy</div>
<div class="t cm c" style="left:130.07px;top:361.21px;width:32.30px;height:11.52px;line-height:11.52px;">biceps</div>
<div class="t cm c" style="left:130.07px;top:376.54px;width:32.30px;height:11.52px;line-height:11.52px;">biceps</div>
<div class="t cm c" style="left:130.07px;top:391.87px;width:32.30px;height:11.52px;line-height:11.52px;">brzuch</div>
<div class="t cm c" style="left:130.07px;top:470.20px;width:32.30px;height:11.52px;line-height:11.52px;">nogi</div>
<div class="t cm c" style="left:130.07px;top:485.53px;width:32.30px;height:11.52px;line-height:11.52px;">nogi</div>
<div class="t cm c" style="left:130.07px;top:500.86px;width:32.30px;height:11.52px;line-height:11.52px;">nogi</div>
<div class="t cm c" style="left:130.07px;top:516.19px;width:32.30px;height:11.52px;line-height:11.52px;">klatka</div>
<div class="t c" style="left:35.97px;top:81.74px;width:68.50px;height:11.71px;line-height:11.71px;">01.01.2024</div>
<div class="t c" style="left:35.97px;top:97.07px;width:68.50px;height:11.71px;line-height:11.71px;">06.01.2024</div>
<div class="t big" style="left:190.57px;top:80.61px;width:331.20px;height:12.89px;line-height:12.89px;">Program treningowy split 4 dni</div>
<div class="t hd c" style="left:190.57px;top:112.94px;width:329.90px;height:12.89px;line-height:12.89px;">01.01.2024 poniedziałek</div>
<div class="t hd c" style="left:190.57px;top:283.24px;width:329.90px;height:12.89px;line-height:12.89px;">03.01.2024 środa</div>
<div class="t hd c" style="left:190.57px;top:438.21px;width:329.90px;height:12.89px;line-height:12.89px;">05.01.2024 piątek</div>
<div class="t b r" style="left:168.07px;top:144.74px;width:18.10px;height:11.71px;line-height:11.71px;">1</div>
<div class="t " style="left:190.57px;top:144.74px;width:331.20px;height:11.71px;line-height:11.71px;white-space:pre;">Wyciskanie sztangi leżąc - Bench Press</div>
<div class="t b r" style="left:168.07px;top:160.07px;width:18.10px;height:11.71px;line-height:11.71px;">2</div>
<div class="t " style="left:190.57px;top:160.07px;width:331.20px;height:11.71px;line-height:11.71px;white-space:pre;">Przenoszenie hantli za głowę - Pullover</div>
<div class="t b r" style="left:168.07px;top:175.40px;width:18.10px;height:11.71px;line-height:11.71px;">3</div>
<div class="t " style="left:190.57px;top:175.40px;width:331.20px;height:11.71px;line-height:11.71px;white-space:pre;">Rozpiętki z hantlami -  Dumbbell Fly</div>
<div class="t b r" style="left:168.07px;top:190.73px;width:18.10px;height:11.71px;line-height:11.71px;">4</div>
<div class="t " style="left:190.57px;top:190.73px;width:331.20px;height:11.71px;line-height:11.71px;white-space:pre;">Arnoldki hantle - Arnold Press</div>
<div class="t b r" style="left:168.07px;top:206.06px;width:18.10px;height:11.71px;line-height:11.71px;">5</div>
<div class="t " style="left:190.57px;top:206.06px;width:331.20px;height:11.71px;line-height:11.71px;white-space:pre;">Odwrotne rozpiętki w opadzie - Rear Fly</div>
<div class="t b r" style="left:168.07px;top:221.39px;width:18.10px;height:11.71px;line-height:11.71px;">6</div>
<div class="t " style="left:190.57px;top:221.39px;width:331.20px;height:11.71px;line-height:11.71px;white-space:pre;">Wyciskanie francuskie <span style="margin-right:1.2px">sztangą</span> - Overhead Triceps Extension</div>
<div class="t b r" style="left:168.07px;top:236.72px;width:18.10px;height:11.71px;line-height:11.71px;">7</div>
<div class="t " style="left:190.57px;top:236.72px;width:331.20px;height:11.71px;line-height:11.71px;white-space:pre;">Pompki odwrotne na ławce - Bench Dips</div>
<div class="t b r" style="left:168.07px;top:315.04px;width:18.10px;height:11.71px;line-height:11.71px;">1</div>
<div class="t " style="left:190.57px;top:315.04px;width:331.20px;height:11.71px;line-height:11.71px;white-space:pre;">Martwy ciąg -  Deadlift</div>
<div class="t b r" style="left:168.07px;top:330.37px;width:18.10px;height:11.71px;line-height:11.71px;">2</div>
<div class="t " style="left:190.57px;top:330.37px;width:331.20px;height:11.71px;line-height:11.71px;white-space:pre;">Wiosłowanie hantlami na ławce dodatniej - Dumbbell Row</div>
<div class="t b r" style="left:168.07px;top:345.70px;width:18.10px;height:11.71px;line-height:11.71px;">3</div>
<div class="t " style="left:190.57px;top:345.70px;width:331.20px;height:11.71px;line-height:11.71px;white-space:pre;">Podciąganie hantli do boków - Dumbbell Lateral Raise</div>
<div class="t b r" style="left:168.07px;top:361.03px;width:18.10px;height:11.71px;line-height:11.71px;">4</div>
<div class="t " style="left:190.57px;top:361.03px;width:331.20px;height:11.71px;line-height:11.71px;white-space:pre;">Uginanie ramion młotkowe - Hammer Curls</div>
<div class="t b r" style="left:168.07px;top:376.36px;width:18.10px;height:11.71px;line-height:11.71px;">5</div>
<div class="t " style="left:190.57px;top:376.36px;width:331.20px;height:11.71px;line-height:11.71px;white-space:pre;">Uginanie ramion ze sztangą - Barbell Curl</div>
<div class="t b r" style="left:168.07px;top:391.69px;width:18.10px;height:11.71px;line-height:11.71px;">6</div>
<div class="t " style="left:190.57px;top:391.69px;width:331.20px;height:11.71px;line-height:11.71px;white-space:pre;">Koło do brzuszków na kolanach - Ab Wheel Rollout from Knees</div>
<div class="t b r" style="left:168.07px;top:470.01px;width:18.10px;height:11.71px;line-height:11.71px;">1</div>
<div class="t " style="left:190.57px;top:470.01px;width:331.20px;height:11.71px;line-height:11.71px;white-space:pre;">Przysiad ze sztangą na plecach Back Squat with Barbell</div>
<div class="t b r" style="left:168.07px;top:485.34px;width:18.10px;height:11.71px;line-height:11.71px;">2</div>
<div class="t " style="left:190.57px;top:485.34px;width:331.20px;height:11.71px;line-height:11.71px;white-space:pre;">Przysiad bułgarski - Bulgarian Split Squat</div>
<div class="t b r" style="left:168.07px;top:500.67px;width:18.10px;height:11.71px;line-height:11.71px;">3</div>
<div class="t " style="left:190.57px;top:500.67px;width:331.20px;height:11.71px;line-height:11.71px;white-space:pre;">Wspięcia na palce z hantlami - Dumbbell Calf Raises</div>
<div class="t b r" style="left:168.07px;top:516.00px;width:18.10px;height:11.71px;line-height:11.71px;">4</div>
<div class="t " style="left:190.57px;top:516.00px;width:331.20px;height:11.71px;line-height:11.71px;white-space:pre;">Wyciskanie sztangi leżąc (ławka dodatnia) - Bench Press with Barbell</div>
<div class="t mono" style="left:526.87px;top:113.64px;width:134.90px;height:12.89px;line-height:12.89px;">I seria</div>
<div class="t r" style="left:526.17px;top:129.41px;width:33.40px;height:11.71px;line-height:11.71px;">kg</div>
<div class="t r" style="left:563.97px;top:129.41px;width:33.60px;height:11.71px;line-height:11.71px;">powt.</div>
<div class="t mono" style="left:608.67px;top:113.64px;width:135.10px;height:12.89px;line-height:12.89px;">II seria</div>
<div class="t r" style="left:607.97px;top:129.41px;width:33.60px;height:11.71px;line-height:11.71px;">kg</div>
<div class="t r" style="left:645.97px;top:129.41px;width:33.60px;height:11.71px;line-height:11.71px;">powt.</div>
<div class="t mono" style="left:690.67px;top:113.64px;width:135.10px;height:12.89px;line-height:12.89px;">III seria</div>
<div class="t r" style="left:689.97px;top:129.41px;width:33.60px;height:11.71px;line-height:11.71px;">kg</div>
<div class="t r" style="left:727.97px;top:129.41px;width:33.60px;height:11.71px;line-height:11.71px;">powt.</div>
<div class="t mono" style="left:772.67px;top:113.64px;width:135.10px;height:12.89px;line-height:12.89px;">IV seria</div>
<div class="t r" style="left:771.97px;top:129.41px;width:33.60px;height:11.71px;line-height:11.71px;">kg</div>
<div class="t r" style="left:809.97px;top:129.41px;width:33.60px;height:11.71px;line-height:11.71px;">powt.</div>
<div class="t mono" style="left:854.67px;top:113.64px;width:135.10px;height:12.89px;line-height:12.89px;">V seria</div>
<div class="t r" style="left:853.97px;top:129.41px;width:33.60px;height:11.71px;line-height:11.71px;">kg</div>
<div class="t r" style="left:891.97px;top:129.41px;width:33.60px;height:11.71px;line-height:11.71px;">powt.</div>
<div class="t mono" style="left:526.87px;top:283.94px;width:134.90px;height:12.89px;line-height:12.89px;">I seria</div>
<div class="t r" style="left:526.17px;top:299.71px;width:33.40px;height:11.71px;line-height:11.71px;">kg</div>
<div class="t r" style="left:563.97px;top:299.71px;width:33.60px;height:11.71px;line-height:11.71px;">powt.</div>
<div class="t mono" style="left:608.67px;top:283.94px;width:135.10px;height:12.89px;line-height:12.89px;">II seria</div>
<div class="t r" style="left:607.97px;top:299.71px;width:33.60px;height:11.71px;line-height:11.71px;">kg</div>
<div class="t r" style="left:645.97px;top:299.71px;width:33.60px;height:11.71px;line-height:11.71px;">powt.</div>
<div class="t mono" style="left:690.67px;top:283.94px;width:135.10px;height:12.89px;line-height:12.89px;">III seria</div>
<div class="t r" style="left:689.97px;top:299.71px;width:33.60px;height:11.71px;line-height:11.71px;">kg</div>
<div class="t r" style="left:727.97px;top:299.71px;width:33.60px;height:11.71px;line-height:11.71px;">powt.</div>
<div class="t mono" style="left:772.67px;top:283.94px;width:135.10px;height:12.89px;line-height:12.89px;">IV seria</div>
<div class="t r" style="left:771.97px;top:299.71px;width:33.60px;height:11.71px;line-height:11.71px;">kg</div>
<div class="t r" style="left:809.97px;top:299.71px;width:33.60px;height:11.71px;line-height:11.71px;">powt.</div>
<div class="t mono" style="left:854.67px;top:283.94px;width:135.10px;height:12.89px;line-height:12.89px;">V seria</div>
<div class="t r" style="left:853.97px;top:299.71px;width:33.60px;height:11.71px;line-height:11.71px;">kg</div>
<div class="t r" style="left:891.97px;top:299.71px;width:33.60px;height:11.71px;line-height:11.71px;">powt.</div>
<div class="t mono" style="left:526.87px;top:438.91px;width:134.90px;height:12.89px;line-height:12.89px;">I seria</div>
<div class="t r" style="left:526.17px;top:454.68px;width:33.40px;height:11.71px;line-height:11.71px;">kg</div>
<div class="t r" style="left:563.97px;top:454.68px;width:33.60px;height:11.71px;line-height:11.71px;">powt.</div>
<div class="t mono" style="left:608.67px;top:438.91px;width:135.10px;height:12.89px;line-height:12.89px;">II seria</div>
<div class="t r" style="left:607.97px;top:454.68px;width:33.60px;height:11.71px;line-height:11.71px;">kg</div>
<div class="t r" style="left:645.97px;top:454.68px;width:33.60px;height:11.71px;line-height:11.71px;">powt.</div>
<div class="t mono" style="left:690.67px;top:438.91px;width:135.10px;height:12.89px;line-height:12.89px;">III seria</div>
<div class="t r" style="left:689.97px;top:454.68px;width:33.60px;height:11.71px;line-height:11.71px;">kg</div>
<div class="t r" style="left:727.97px;top:454.68px;width:33.60px;height:11.71px;line-height:11.71px;">powt.</div>
<div class="t mono" style="left:772.67px;top:438.91px;width:135.10px;height:12.89px;line-height:12.89px;">IV seria</div>
<div class="t r" style="left:771.97px;top:454.68px;width:33.60px;height:11.71px;line-height:11.71px;">kg</div>
<div class="t r" style="left:809.97px;top:454.68px;width:33.60px;height:11.71px;line-height:11.71px;">powt.</div>
<div class="t mono" style="left:854.67px;top:438.91px;width:135.10px;height:12.89px;line-height:12.89px;">V seria</div>
<div class="t r" style="left:853.97px;top:454.68px;width:33.60px;height:11.71px;line-height:11.71px;">kg</div>
<div class="t r" style="left:891.97px;top:454.68px;width:33.60px;height:11.71px;line-height:11.71px;">powt.</div>
<div class="t r" style="left:526.17px;top:144.74px;width:33.40px;height:11.71px;line-height:11.71px;">45</div>
<div class="t r" style="left:563.97px;top:144.74px;width:33.60px;height:11.71px;line-height:11.71px;">10</div>
<div class="t r" style="left:607.97px;top:144.74px;width:33.60px;height:11.71px;line-height:11.71px;">50</div>
<div class="t r" style="left:645.97px;top:144.74px;width:33.60px;height:11.71px;line-height:11.71px;">8</div>
<div class="t r" style="left:689.97px;top:144.74px;width:33.60px;height:11.71px;line-height:11.71px;">53</div>
<div class="t r" style="left:727.97px;top:144.74px;width:33.60px;height:11.71px;line-height:11.71px;">0</div>
<div class="t r" style="left:771.97px;top:144.74px;width:33.60px;height:11.71px;line-height:11.71px;">0</div>
<div class="t r" style="left:809.97px;top:144.74px;width:33.60px;height:11.71px;line-height:11.71px;">0</div>
<div class="t r" style="left:853.97px;top:144.74px;width:33.60px;height:11.71px;line-height:11.71px;">0</div>
<div class="t r" style="left:891.97px;top:144.74px;width:33.60px;height:11.71px;line-height:11.71px;">0</div>
<div class="t r" style="left:526.17px;top:160.07px;width:33.40px;height:11.71px;line-height:11.71px;">17,5</div>
<div class="t r" style="left:563.97px;top:160.07px;width:33.60px;height:11.71px;line-height:11.71px;">10</div>
<div class="t r" style="left:607.97px;top:160.07px;width:33.60px;height:11.71px;line-height:11.71px;">1</div>
<div class="t r" style="left:645.97px;top:160.07px;width:33.60px;height:11.71px;line-height:11.71px;">1</div>
<div class="t r" style="left:689.97px;top:160.07px;width:33.60px;height:11.71px;line-height:11.71px;">1</div>
<div class="t r" style="left:727.97px;top:160.07px;width:33.60px;height:11.71px;line-height:11.71px;">1</div>
<div class="t r" style="left:771.97px;top:160.07px;width:33.60px;height:11.71px;line-height:11.71px;">0</div>
<div class="t r" style="left:809.97px;top:160.07px;width:33.60px;height:11.71px;line-height:11.71px;">0</div>
<div class="t r" style="left:853.97px;top:160.07px;width:33.60px;height:11.71px;line-height:11.71px;">0</div>
<div class="t r" style="left:891.97px;top:160.07px;width:33.60px;height:11.71px;line-height:11.71px;">0</div>
<div class="t r" style="left:526.17px;top:175.40px;width:33.40px;height:11.71px;line-height:11.71px;">12</div>
<div class="t r" style="left:563.97px;top:175.40px;width:33.60px;height:11.71px;line-height:11.71px;">10</div>
<div class="t r" style="left:607.97px;top:175.40px;width:33.60px;height:11.71px;line-height:11.71px;">1</div>
<div class="t r" style="left:645.97px;top:175.40px;width:33.60px;height:11.71px;line-height:11.71px;">1</div>
<div class="t r" style="left:689.97px;top:175.40px;width:33.60px;height:11.71px;line-height:11.71px;">1</div>
<div class="t r" style="left:727.97px;top:175.40px;width:33.60px;height:11.71px;line-height:11.71px;">1</div>
<div class="t r" style="left:771.97px;top:175.40px;width:33.60px;height:11.71px;line-height:11.71px;">0</div>
<div class="t r" style="left:809.97px;top:175.40px;width:33.60px;height:11.71px;line-height:11.71px;">0</div>
<div class="t r" style="left:853.97px;top:175.40px;width:33.60px;height:11.71px;line-height:11.71px;">0</div>
<div class="t r" style="left:891.97px;top:175.40px;width:33.60px;height:11.71px;line-height:11.71px;">0</div>
<div class="t r" style="left:526.17px;top:190.73px;width:33.40px;height:11.71px;line-height:11.71px;">12</div>
<div class="t r" style="left:563.97px;top:190.73px;width:33.60px;height:11.71px;line-height:11.71px;">1</div>
<div class="t r" style="left:607.97px;top:190.73px;width:33.60px;height:11.71px;line-height:11.71px;">1</div>
<div class="t r" style="left:645.97px;top:190.73px;width:33.60px;height:11.71px;line-height:11.71px;">1</div>
<div class="t r" style="left:689.97px;top:190.73px;width:33.60px;height:11.71px;line-height:11.71px;">1</div>
<div class="t r" style="left:727.97px;top:190.73px;width:33.60px;height:11.71px;line-height:11.71px;">1</div>
<div class="t r" style="left:771.97px;top:190.73px;width:33.60px;height:11.71px;line-height:11.71px;">0</div>
<div class="t r" style="left:809.97px;top:190.73px;width:33.60px;height:11.71px;line-height:11.71px;">0</div>
<div class="t r" style="left:853.97px;top:190.73px;width:33.60px;height:11.71px;line-height:11.71px;">0</div>
<div class="t r" style="left:891.97px;top:190.73px;width:33.60px;height:11.71px;line-height:11.71px;">0</div>
<div class="t r" style="left:526.17px;top:206.06px;width:33.40px;height:11.71px;line-height:11.71px;">7</div>
<div class="t r" style="left:563.97px;top:206.06px;width:33.60px;height:11.71px;line-height:11.71px;">1</div>
<div class="t r" style="left:607.97px;top:206.06px;width:33.60px;height:11.71px;line-height:11.71px;">1</div>
<div class="t r" style="left:645.97px;top:206.06px;width:33.60px;height:11.71px;line-height:11.71px;">1</div>
<div class="t r" style="left:689.97px;top:206.06px;width:33.60px;height:11.71px;line-height:11.71px;">1</div>
<div class="t r" style="left:727.97px;top:206.06px;width:33.60px;height:11.71px;line-height:11.71px;">1</div>
<div class="t r" style="left:771.97px;top:206.06px;width:33.60px;height:11.71px;line-height:11.71px;">0</div>
<div class="t r" style="left:809.97px;top:206.06px;width:33.60px;height:11.71px;line-height:11.71px;">0</div>
<div class="t r" style="left:853.97px;top:206.06px;width:33.60px;height:11.71px;line-height:11.71px;">0</div>
<div class="t r" style="left:891.97px;top:206.06px;width:33.60px;height:11.71px;line-height:11.71px;">0</div>
<div class="t r" style="left:526.17px;top:221.39px;width:33.40px;height:11.71px;line-height:11.71px;">16</div>
<div class="t r" style="left:563.97px;top:221.39px;width:33.60px;height:11.71px;line-height:11.71px;">1</div>
<div class="t r" style="left:607.97px;top:221.39px;width:33.60px;height:11.71px;line-height:11.71px;">1</div>
<div class="t r" style="left:645.97px;top:221.39px;width:33.60px;height:11.71px;line-height:11.71px;">1</div>
<div class="t r" style="left:689.97px;top:221.39px;width:33.60px;height:11.71px;line-height:11.71px;">1</div>
<div class="t r" style="left:727.97px;top:221.39px;width:33.60px;height:11.71px;line-height:11.71px;">1</div>
<div class="t r" style="left:771.97px;top:221.39px;width:33.60px;height:11.71px;line-height:11.71px;">0</div>
<div class="t r" style="left:809.97px;top:221.39px;width:33.60px;height:11.71px;line-height:11.71px;">0</div>
<div class="t r" style="left:853.97px;top:221.39px;width:33.60px;height:11.71px;line-height:11.71px;">0</div>
<div class="t r" style="left:891.97px;top:221.39px;width:33.60px;height:11.71px;line-height:11.71px;">0</div>
<div class="t r" style="left:526.17px;top:236.72px;width:33.40px;height:11.71px;line-height:11.71px;">1</div>
<div class="t r" style="left:563.97px;top:236.72px;width:33.60px;height:11.71px;line-height:11.71px;">15</div>
<div class="t r" style="left:607.97px;top:236.72px;width:33.60px;height:11.71px;line-height:11.71px;">1</div>
<div class="t r" style="left:645.97px;top:236.72px;width:33.60px;height:11.71px;line-height:11.71px;">1</div>
<div class="t r" style="left:689.97px;top:236.72px;width:33.60px;height:11.71px;line-height:11.71px;">1</div>
<div class="t r" style="left:727.97px;top:236.72px;width:33.60px;height:11.71px;line-height:11.71px;">1</div>
<div class="t r" style="left:771.97px;top:236.72px;width:33.60px;height:11.71px;line-height:11.71px;">0</div>
<div class="t r" style="left:809.97px;top:236.72px;width:33.60px;height:11.71px;line-height:11.71px;">0</div>
<div class="t r" style="left:853.97px;top:236.72px;width:33.60px;height:11.71px;line-height:11.71px;">0</div>
<div class="t r" style="left:891.97px;top:236.72px;width:33.60px;height:11.71px;line-height:11.71px;">0</div>
<div class="t r" style="left:526.17px;top:315.04px;width:33.40px;height:11.71px;line-height:11.71px;">80</div>
<div class="t r" style="left:563.97px;top:315.04px;width:33.60px;height:11.71px;line-height:11.71px;">8</div>
<div class="t r" style="left:607.97px;top:315.04px;width:33.60px;height:11.71px;line-height:11.71px;">1</div>
<div class="t r" style="left:645.97px;top:315.04px;width:33.60px;height:11.71px;line-height:11.71px;">1</div>
<div class="t r" style="left:689.97px;top:315.04px;width:33.60px;height:11.71px;line-height:11.71px;">1</div>
<div class="t r" style="left:727.97px;top:315.04px;width:33.60px;height:11.71px;line-height:11.71px;">1</div>
<div class="t r" style="left:771.97px;top:315.04px;width:33.60px;height:11.71px;line-height:11.71px;">1</div>
<div class="t r" style="left:809.97px;top:315.04px;width:33.60px;height:11.71px;line-height:11.71px;">1</div>
<div class="t r" style="left:853.97px;top:315.04px;width:33.60px;height:11.71px;line-height:11.71px;">0</div>
<div class="t r" style="left:891.97px;top:315.04px;width:33.60px;height:11.71px;line-height:11.71px;">0</div>
<div class="t r" style="left:526.17px;top:330.37px;width:33.40px;height:11.71px;line-height:11.71px;">15</div>
<div class="t r" style="left:563.97px;top:330.37px;width:33.60px;height:11.71px;line-height:11.71px;">15</div>
<div class="t r" style="left:607.97px;top:330.37px;width:33.60px;height:11.71px;line-height:11.71px;">1</div>
<div class="t r" style="left:645.97px;top:330.37px;width:33.60px;height:11.71px;line-height:11.71px;">1</div>
<div class="t r" style="left:689.97px;top:330.37px;width:33.60px;height:11.71px;line-height:11.71px;">1</div>
<div class="t r" style="left:727.97px;top:330.37px;width:33.60px;height:11.71px;line-height:11.71px;">1</div>
<div class="t r" style="left:771.97px;top:330.37px;width:33.60px;height:11.71px;line-height:11.71px;">0</div>
<div class="t r" style="left:809.97px;top:330.37px;width:33.60px;height:11.71px;line-height:11.71px;">0</div>
<div class="t r" style="left:853.97px;top:330.37px;width:33.60px;height:11.71px;line-height:11.71px;">0</div>
<div class="t r" style="left:891.97px;top:330.37px;width:33.60px;height:11.71px;line-height:11.71px;">0</div>
<div class="t r" style="left:526.17px;top:345.70px;width:33.40px;height:11.71px;line-height:11.71px;">7</div>
<div class="t r" style="left:563.97px;top:345.70px;width:33.60px;height:11.71px;line-height:11.71px;">10</div>
<div class="t r" style="left:607.97px;top:345.70px;width:33.60px;height:11.71px;line-height:11.71px;">1</div>
<div class="t r" style="left:645.97px;top:345.70px;width:33.60px;height:11.71px;line-height:11.71px;">1</div>
<div class="t r" style="left:689.97px;top:345.70px;width:33.60px;height:11.71px;line-height:11.71px;">1</div>
<div class="t r" style="left:727.97px;top:345.70px;width:33.60px;height:11.71px;line-height:11.71px;">1</div>
<div class="t r" style="left:771.97px;top:345.70px;width:33.60px;height:11.71px;line-height:11.71px;">0</div>
<div class="t r" style="left:809.97px;top:345.70px;width:33.60px;height:11.71px;line-height:11.71px;">0</div>
<div class="t r" style="left:853.97px;top:345.70px;width:33.60px;height:11.71px;line-height:11.71px;">0</div>
<div class="t r" style="left:891.97px;top:345.70px;width:33.60px;height:11.71px;line-height:11.71px;">0</div>
<div class="t r" style="left:526.17px;top:361.03px;width:33.40px;height:11.71px;line-height:11.71px;">15</div>
<div class="t r" style="left:563.97px;top:361.03px;width:33.60px;height:11.71px;line-height:11.71px;">10</div>
<div class="t r" style="left:607.97px;top:361.03px;width:33.60px;height:11.71px;line-height:11.71px;">1</div>
<div class="t r" style="left:645.97px;top:361.03px;width:33.60px;height:11.71px;line-height:11.71px;">1</div>
<div class="t r" style="left:689.97px;top:361.03px;width:33.60px;height:11.71px;line-height:11.71px;">0</div>
<div class="t r" style="left:727.97px;top:361.03px;width:33.60px;height:11.71px;line-height:11.71px;">0</div>
<div class="t r" style="left:771.97px;top:361.03px;width:33.60px;height:11.71px;line-height:11.71px;">0</div>
<div class="t r" style="left:809.97px;top:361.03px;width:33.60px;height:11.71px;line-height:11.71px;">0</div>
<div class="t r" style="left:853.97px;top:361.03px;width:33.60px;height:11.71px;line-height:11.71px;">0</div>
<div class="t r" style="left:891.97px;top:361.03px;width:33.60px;height:11.71px;line-height:11.71px;">0</div>
<div class="t r" style="left:526.17px;top:376.36px;width:33.40px;height:11.71px;line-height:11.71px;">25</div>
<div class="t r" style="left:563.97px;top:376.36px;width:33.60px;height:11.71px;line-height:11.71px;">15</div>
<div class="t r" style="left:607.97px;top:376.36px;width:33.60px;height:11.71px;line-height:11.71px;">1</div>
<div class="t r" style="left:645.97px;top:376.36px;width:33.60px;height:11.71px;line-height:11.71px;">1</div>
<div class="t r" style="left:689.97px;top:376.36px;width:33.60px;height:11.71px;line-height:11.71px;">0</div>
<div class="t r" style="left:727.97px;top:376.36px;width:33.60px;height:11.71px;line-height:11.71px;">0</div>
<div class="t r" style="left:771.97px;top:376.36px;width:33.60px;height:11.71px;line-height:11.71px;">0</div>
<div class="t r" style="left:809.97px;top:376.36px;width:33.60px;height:11.71px;line-height:11.71px;">0</div>
<div class="t r" style="left:853.97px;top:376.36px;width:33.60px;height:11.71px;line-height:11.71px;">0</div>
<div class="t r" style="left:891.97px;top:376.36px;width:33.60px;height:11.71px;line-height:11.71px;">0</div>
<div class="t r" style="left:526.17px;top:391.69px;width:33.40px;height:11.71px;line-height:11.71px;">0</div>
<div class="t r" style="left:563.97px;top:391.69px;width:33.60px;height:11.71px;line-height:11.71px;">10</div>
<div class="t r" style="left:607.97px;top:391.69px;width:33.60px;height:11.71px;line-height:11.71px;">1</div>
<div class="t r" style="left:645.97px;top:391.69px;width:33.60px;height:11.71px;line-height:11.71px;">1</div>
<div class="t r" style="left:689.97px;top:391.69px;width:33.60px;height:11.71px;line-height:11.71px;">1</div>
<div class="t r" style="left:727.97px;top:391.69px;width:33.60px;height:11.71px;line-height:11.71px;">1</div>
<div class="t r" style="left:771.97px;top:391.69px;width:33.60px;height:11.71px;line-height:11.71px;">0</div>
<div class="t r" style="left:809.97px;top:391.69px;width:33.60px;height:11.71px;line-height:11.71px;">0</div>
<div class="t r" style="left:853.97px;top:391.69px;width:33.60px;height:11.71px;line-height:11.71px;">0</div>
<div class="t r" style="left:891.97px;top:391.69px;width:33.60px;height:11.71px;line-height:11.71px;">0</div>
<div class="t r" style="left:526.17px;top:470.01px;width:33.40px;height:11.71px;line-height:11.71px;">50</div>
<div class="t r" style="left:563.97px;top:470.01px;width:33.60px;height:11.71px;line-height:11.71px;">10</div>
<div class="t r" style="left:607.97px;top:470.01px;width:33.60px;height:11.71px;line-height:11.71px;">1</div>
<div class="t r" style="left:645.97px;top:470.01px;width:33.60px;height:11.71px;line-height:11.71px;">1</div>
<div class="t r" style="left:689.97px;top:470.01px;width:33.60px;height:11.71px;line-height:11.71px;">1</div>
<div class="t r" style="left:727.97px;top:470.01px;width:33.60px;height:11.71px;line-height:11.71px;">1</div>
<div class="t r" style="left:771.97px;top:470.01px;width:33.60px;height:11.71px;line-height:11.71px;">1</div>
<div class="t r" style="left:809.97px;top:470.01px;width:33.60px;height:11.71px;line-height:11.71px;">1</div>
<div class="t r" style="left:853.97px;top:470.01px;width:33.60px;height:11.71px;line-height:11.71px;">0</div>
<div class="t r" style="left:891.97px;top:470.01px;width:33.60px;height:11.71px;line-height:11.71px;">0</div>
<div class="t r" style="left:526.17px;top:485.34px;width:33.40px;height:11.71px;line-height:11.71px;">12</div>
<div class="t r" style="left:563.97px;top:485.34px;width:33.60px;height:11.71px;line-height:11.71px;">8</div>
<div class="t r" style="left:607.97px;top:485.34px;width:33.60px;height:11.71px;line-height:11.71px;">1</div>
<div class="t r" style="left:645.97px;top:485.34px;width:33.60px;height:11.71px;line-height:11.71px;">1</div>
<div class="t r" style="left:689.97px;top:485.34px;width:33.60px;height:11.71px;line-height:11.71px;">1</div>
<div class="t r" style="left:727.97px;top:485.34px;width:33.60px;height:11.71px;line-height:11.71px;">1</div>
<div class="t r" style="left:771.97px;top:485.34px;width:33.60px;height:11.71px;line-height:11.71px;">0</div>
<div class="t r" style="left:809.97px;top:485.34px;width:33.60px;height:11.71px;line-height:11.71px;">0</div>
<div class="t r" style="left:853.97px;top:485.34px;width:33.60px;height:11.71px;line-height:11.71px;">0</div>
<div class="t r" style="left:891.97px;top:485.34px;width:33.60px;height:11.71px;line-height:11.71px;">0</div>
<div class="t r" style="left:526.17px;top:500.67px;width:33.40px;height:11.71px;line-height:11.71px;">12</div>
<div class="t r" style="left:563.97px;top:500.67px;width:33.60px;height:11.71px;line-height:11.71px;">12</div>
<div class="t r" style="left:607.97px;top:500.67px;width:33.60px;height:11.71px;line-height:11.71px;">1</div>
<div class="t r" style="left:645.97px;top:500.67px;width:33.60px;height:11.71px;line-height:11.71px;">1</div>
<div class="t r" style="left:689.97px;top:500.67px;width:33.60px;height:11.71px;line-height:11.71px;">1</div>
<div class="t r" style="left:727.97px;top:500.67px;width:33.60px;height:11.71px;line-height:11.71px;">1</div>
<div class="t r" style="left:771.97px;top:500.67px;width:33.60px;height:11.71px;line-height:11.71px;">0</div>
<div class="t r" style="left:809.97px;top:500.67px;width:33.60px;height:11.71px;line-height:11.71px;">0</div>
<div class="t r" style="left:853.97px;top:500.67px;width:33.60px;height:11.71px;line-height:11.71px;">0</div>
<div class="t r" style="left:891.97px;top:500.67px;width:33.60px;height:11.71px;line-height:11.71px;">0</div>
<div class="t r" style="left:526.17px;top:516.00px;width:33.40px;height:11.71px;line-height:11.71px;">35</div>
<div class="t r" style="left:563.97px;top:516.00px;width:33.60px;height:11.71px;line-height:11.71px;">12</div>
<div class="t r" style="left:607.97px;top:516.00px;width:33.60px;height:11.71px;line-height:11.71px;">40</div>
<div class="t r" style="left:645.97px;top:516.00px;width:33.60px;height:11.71px;line-height:11.71px;">10</div>
<div class="t r" style="left:689.97px;top:516.00px;width:33.60px;height:11.71px;line-height:11.71px;">45</div>
<div class="t r" style="left:727.97px;top:516.00px;width:33.60px;height:11.71px;line-height:11.71px;">8</div>
<div class="t r" style="left:771.97px;top:516.00px;width:33.60px;height:11.71px;line-height:11.71px;">50</div>
<div class="t r" style="left:809.97px;top:516.00px;width:33.60px;height:11.71px;line-height:11.71px;">1</div>
<div class="t r" style="left:853.97px;top:516.00px;width:33.60px;height:11.71px;line-height:11.71px;">0</div>
<div class="t r" style="left:891.97px;top:516.00px;width:33.60px;height:11.71px;line-height:11.71px;">0</div>
<svg class="gridsvg" width="1000" height="561" viewBox="0 0 1000 561"><rect x="0.00" y="60.50" width="974.50" height="16.90" fill="#ffffff"/><rect x="188.37" y="60.90" width="334.87" height="16.10" fill="#d3e3fd"/><rect x="0.00" y="77.40" width="33.40" height="456.20" fill="#ffffff"/><rect x="0.00" y="110.18" width="33.00" height="16.27" fill="#d3e3fd"/><line x1="0.00" y1="60.50" x2="998.60" y2="60.50" stroke="#d5d5d5" stroke-width="0.9"/><line x1="0.00" y1="77.40" x2="974.50" y2="77.40" stroke="#cdcdcd" stroke-width="0.9"/><line x1="107.60" y1="60.50" x2="107.60" y2="77.40" stroke="#cdcdcd" stroke-width="0.9"/><line x1="127.50" y1="60.50" x2="127.50" y2="77.40" stroke="#cdcdcd" stroke-width="0.9"/><line x1="165.50" y1="60.50" x2="165.50" y2="77.40" stroke="#cdcdcd" stroke-width="0.9"/><line x1="188.00" y1="60.50" x2="188.00" y2="77.40" stroke="#cdcdcd" stroke-width="0.9"/><line x1="523.60" y1="60.50" x2="523.60" y2="77.40" stroke="#cdcdcd" stroke-width="0.9"/><line x1="561.40" y1="60.50" x2="561.40" y2="77.40" stroke="#cdcdcd" stroke-width="0.9"/><line x1="599.40" y1="60.50" x2="599.40" y2="77.40" stroke="#cdcdcd" stroke-width="0.9"/><line x1="605.40" y1="60.50" x2="605.40" y2="77.40" stroke="#cdcdcd" stroke-width="0.9"/><line x1="643.40" y1="60.50" x2="643.40" y2="77.40" stroke="#cdcdcd" stroke-width="0.9"/><line x1="681.40" y1="60.50" x2="681.40" y2="77.40" stroke="#cdcdcd" stroke-width="0.9"/><line x1="687.40" y1="60.50" x2="687.40" y2="77.40" stroke="#cdcdcd" stroke-width="0.9"/><line x1="725.40" y1="60.50" x2="725.40" y2="77.40" stroke="#cdcdcd" stroke-width="0.9"/><line x1="763.40" y1="60.50" x2="763.40" y2="77.40" stroke="#cdcdcd" stroke-width="0.9"/><line x1="769.40" y1="60.50" x2="769.40" y2="77.40" stroke="#cdcdcd" stroke-width="0.9"/><line x1="807.40" y1="60.50" x2="807.40" y2="77.40" stroke="#cdcdcd" stroke-width="0.9"/><line x1="845.40" y1="60.50" x2="845.40" y2="77.40" stroke="#cdcdcd" stroke-width="0.9"/><line x1="851.40" y1="60.50" x2="851.40" y2="77.40" stroke="#cdcdcd" stroke-width="0.9"/><line x1="889.40" y1="60.50" x2="889.40" y2="77.40" stroke="#cdcdcd" stroke-width="0.9"/><line x1="927.40" y1="60.50" x2="927.40" y2="77.40" stroke="#cdcdcd" stroke-width="0.9"/><line x1="933.40" y1="60.50" x2="933.40" y2="77.40" stroke="#cdcdcd" stroke-width="0.9"/><line x1="974.50" y1="60.50" x2="974.50" y2="77.40" stroke="#cdcdcd" stroke-width="0.9"/><line x1="33.40" y1="77.40" x2="33.40" y2="533.60" stroke="#cdcdcd" stroke-width="0.9"/><line x1="0.00" y1="94.48" x2="33.40" y2="94.48" stroke="#cdcdcd" stroke-width="0.9"/><line x1="0.00" y1="109.81" x2="33.40" y2="109.81" stroke="#cdcdcd" stroke-width="0.9"/><line x1="0.00" y1="126.81" x2="33.40" y2="126.81" stroke="#cdcdcd" stroke-width="0.9"/><line x1="0.00" y1="142.14" x2="33.40" y2="142.14" stroke="#cdcdcd" stroke-width="0.9"/><line x1="0.00" y1="157.47" x2="33.40" y2="157.47" stroke="#cdcdcd" stroke-width="0.9"/><line x1="0.00" y1="172.80" x2="33.40" y2="172.80" stroke="#cdcdcd" stroke-width="0.9"/><line x1="0.00" y1="188.13" x2="33.40" y2="188.13" stroke="#cdcdcd" stroke-width="0.9"/><line x1="0.00" y1="203.46" x2="33.40" y2="203.46" stroke="#cdcdcd" stroke-width="0.9"/><line x1="0.00" y1="218.79" x2="33.40" y2="218.79" stroke="#cdcdcd" stroke-width="0.9"/><line x1="0.00" y1="234.12" x2="33.40" y2="234.12" stroke="#cdcdcd" stroke-width="0.9"/><line x1="0.00" y1="249.45" x2="33.40" y2="249.45" stroke="#cdcdcd" stroke-width="0.9"/><line x1="0.00" y1="264.78" x2="33.40" y2="264.78" stroke="#cdcdcd" stroke-width="0.9"/><line x1="0.00" y1="280.11" x2="33.40" y2="280.11" stroke="#cdcdcd" stroke-width="0.9"/><line x1="0.00" y1="297.12" x2="33.40" y2="297.12" stroke="#cdcdcd" stroke-width="0.9"/><line x1="0.00" y1="312.45" x2="33.40" y2="312.45" stroke="#cdcdcd" stroke-width="0.9"/><line x1="0.00" y1="327.78" x2="33.40" y2="327.78" stroke="#cdcdcd" stroke-width="0.9"/><line x1="0.00" y1="343.11" x2="33.40" y2="343.11" stroke="#cdcdcd" stroke-width="0.9"/><line x1="0.00" y1="358.44" x2="33.40" y2="358.44" stroke="#cdcdcd" stroke-width="0.9"/><line x1="0.00" y1="373.77" x2="33.40" y2="373.77" stroke="#cdcdcd" stroke-width="0.9"/><line x1="0.00" y1="389.10" x2="33.40" y2="389.10" stroke="#cdcdcd" stroke-width="0.9"/><line x1="0.00" y1="404.43" x2="33.40" y2="404.43" stroke="#cdcdcd" stroke-width="0.9"/><line x1="0.00" y1="419.76" x2="33.40" y2="419.76" stroke="#cdcdcd" stroke-width="0.9"/><line x1="0.00" y1="435.09" x2="33.40" y2="435.09" stroke="#cdcdcd" stroke-width="0.9"/><line x1="0.00" y1="452.09" x2="33.40" y2="452.09" stroke="#cdcdcd" stroke-width="0.9"/><line x1="0.00" y1="467.42" x2="33.40" y2="467.42" stroke="#cdcdcd" stroke-width="0.9"/><line x1="0.00" y1="482.75" x2="33.40" y2="482.75" stroke="#cdcdcd" stroke-width="0.9"/><line x1="0.00" y1="498.08" x2="33.40" y2="498.08" stroke="#cdcdcd" stroke-width="0.9"/><line x1="0.00" y1="513.41" x2="33.40" y2="513.41" stroke="#cdcdcd" stroke-width="0.9"/><rect x="0.00" y="60.90" width="32.20" height="14.90" fill="#f8f9fa"/><rect x="30.80" y="60.50" width="2.80" height="16.90" fill="#bdbdbd"/><rect x="0.00" y="75.20" width="33.60" height="2.60" fill="#bdbdbd"/></svg>
<div class="t ch" style="left:28.77px;top:60.50px;width:84.20px;height:16.90px;line-height:18.90px">A</div>
<div class="t ch" style="left:102.97px;top:60.50px;width:29.90px;height:16.90px;line-height:18.90px">B</div>
<div class="t ch" style="left:122.87px;top:60.50px;width:48.00px;height:16.90px;line-height:18.90px">C</div>
<div class="t ch" style="left:160.87px;top:60.50px;width:32.50px;height:16.90px;line-height:18.90px">D</div>
<div class="t ch sel" style="left:183.37px;top:60.50px;width:345.60px;height:16.90px;line-height:18.90px">E</div>
<div class="t ch" style="left:518.97px;top:60.50px;width:47.80px;height:16.90px;line-height:18.90px">F</div>
<div class="t ch" style="left:556.77px;top:60.50px;width:48.00px;height:16.90px;line-height:18.90px">G</div>
<div class="t ch" style="left:594.77px;top:60.50px;width:16.00px;height:16.90px;line-height:18.90px">H</div>
<div class="t ch" style="left:600.77px;top:60.50px;width:48.00px;height:16.90px;line-height:18.90px">I</div>
<div class="t ch" style="left:638.77px;top:60.50px;width:48.00px;height:16.90px;line-height:18.90px">J</div>
<div class="t ch" style="left:676.77px;top:60.50px;width:16.00px;height:16.90px;line-height:18.90px">K</div>
<div class="t ch" style="left:682.77px;top:60.50px;width:48.00px;height:16.90px;line-height:18.90px">L</div>
<div class="t ch" style="left:720.77px;top:60.50px;width:48.00px;height:16.90px;line-height:18.90px">M</div>
<div class="t ch" style="left:758.77px;top:60.50px;width:16.00px;height:16.90px;line-height:18.90px">N</div>
<div class="t ch" style="left:764.77px;top:60.50px;width:48.00px;height:16.90px;line-height:18.90px">O</div>
<div class="t ch" style="left:802.77px;top:60.50px;width:48.00px;height:16.90px;line-height:18.90px">P</div>
<div class="t ch" style="left:840.77px;top:60.50px;width:16.00px;height:16.90px;line-height:18.90px">Q</div>
<div class="t ch" style="left:846.77px;top:60.50px;width:48.00px;height:16.90px;line-height:18.90px">R</div>
<div class="t ch" style="left:884.77px;top:60.50px;width:48.00px;height:16.90px;line-height:18.90px">S</div>
<div class="t ch" style="left:922.77px;top:60.50px;width:16.00px;height:16.90px;line-height:18.90px">T</div>
<div class="t ch" style="left:928.77px;top:60.50px;width:51.10px;height:16.90px;line-height:18.90px">U</div>
<div class="t rh" style="left:0px;top:77.85px;width:33.4px;height:17.00px;line-height:16.20px">1</div>
<div class="t rh" style="left:0px;top:94.85px;width:33.4px;height:15.33px;line-height:14.53px">2</div>
<div class="t rh sel" style="left:0px;top:110.18px;width:33.4px;height:17.00px;line-height:16.20px">3</div>
<div class="t rh" style="left:0px;top:127.18px;width:33.4px;height:15.33px;line-height:14.53px">4</div>
<div class="t rh" style="left:0px;top:142.51px;width:33.4px;height:15.33px;line-height:14.53px">5</div>
<div class="t rh" style="left:0px;top:157.84px;width:33.4px;height:15.33px;line-height:14.53px">6</div>
<div class="t rh" style="left:0px;top:173.17px;width:33.4px;height:15.33px;line-height:14.53px">7</div>
<div class="t rh" style="left:0px;top:188.50px;width:33.4px;height:15.33px;line-height:14.53px">8</div>
<div class="t rh" style="left:0px;top:203.83px;width:33.4px;height:15.33px;line-height:14.53px">9</div>
<div class="t rh" style="left:0px;top:219.16px;width:33.4px;height:15.33px;line-height:14.53px">10</div>
<div class="t rh" style="left:0px;top:234.49px;width:33.4px;height:15.33px;line-height:14.53px">11</div>
<div class="t rh" style="left:0px;top:249.82px;width:33.4px;height:15.33px;line-height:14.53px">12</div>
<div class="t rh" style="left:0px;top:265.15px;width:33.4px;height:15.33px;line-height:14.53px">13</div>
<div class="t rh" style="left:0px;top:280.48px;width:33.4px;height:17.00px;line-height:16.20px">14</div>
<div class="t rh" style="left:0px;top:297.49px;width:33.4px;height:15.33px;line-height:14.53px">15</div>
<div class="t rh" style="left:0px;top:312.82px;width:33.4px;height:15.33px;line-height:14.53px">16</div>
<div class="t rh" style="left:0px;top:328.15px;width:33.4px;height:15.33px;line-height:14.53px">17</div>
<div class="t rh" style="left:0px;top:343.48px;width:33.4px;height:15.33px;line-height:14.53px">18</div>
<div class="t rh" style="left:0px;top:358.81px;width:33.4px;height:15.33px;line-height:14.53px">19</div>
<div class="t rh" style="left:0px;top:374.14px;width:33.4px;height:15.33px;line-height:14.53px">20</div>
<div class="t rh" style="left:0px;top:389.47px;width:33.4px;height:15.33px;line-height:14.53px">21</div>
<div class="t rh" style="left:0px;top:404.80px;width:33.4px;height:15.33px;line-height:14.53px">22</div>
<div class="t rh" style="left:0px;top:420.13px;width:33.4px;height:15.33px;line-height:14.53px">23</div>
<div class="t rh" style="left:0px;top:435.46px;width:33.4px;height:17.00px;line-height:16.20px">24</div>
<div class="t rh" style="left:0px;top:452.46px;width:33.4px;height:15.33px;line-height:14.53px">25</div>
<div class="t rh" style="left:0px;top:467.79px;width:33.4px;height:15.33px;line-height:14.53px">26</div>
<div class="t rh" style="left:0px;top:483.12px;width:33.4px;height:15.33px;line-height:14.53px">27</div>
<div class="t rh" style="left:0px;top:498.45px;width:33.4px;height:15.33px;line-height:14.53px">28</div>
<div class="t rh" style="left:0px;top:513.78px;width:33.4px;height:15.33px;line-height:14.53px">29</div>
<div class="abs" style="left:188.0px;top:109.9px;width:336.3px;height:16.8px;box-sizing:border-box;border:1.6px solid #0b4fd0;box-shadow:0 0 0 1.5px rgba(50,110,235,0.45), inset 0 0 0 0.7px rgba(255,255,215,0.5)"></div>
</div>
<div class="abs" style="left:974.5px;top:61px;width:15.6px;height:463.4px;background:#f8f9fa"></div>
<div class="abs" style="left:990.1px;top:61px;width:8.5px;height:463.4px;background:#fafafa;border-left:0.8px solid #e2e2e2"></div>
<div class="abs" style="left:998.6px;top:0px;width:1.4px;height:561px;background:#fff"></div>
<div class="abs" style="left:991.4px;top:78.9px;width:6.2px;height:18.6px;border-radius:3.1px;background:#dadce0"></div>
<div class="abs" style="left:990.5px;top:501.6px;width:8.1px;height:22.8px;background:#f8f9fa;border-top:0.8px solid #dadce0"></div>
<div class="abs" style="left:990.5px;top:512.8px;width:8.1px;height:0.8px;background:#dadce0"></div>
<svg class="ic" style="left:992.2px;top:505px" width="5" height="4" viewBox="0 0 5 4"><path d="M0 3.500 L2.500 0.5 L5 3.500Z" fill="#9aa0a6"/></svg>
<svg class="ic" style="left:992.2px;top:517px" width="5" height="4" viewBox="0 0 5 4"><path d="M0 0.5 L2.500 3.500 L5 0.5Z" fill="#9aa0a6"/></svg>
<div class="abs" style="left:0;top:524.4px;width:998.6px;height:9.4px;background:#fff;border-top:0.8px solid #dadce0;border-bottom:0.8px solid #e3e5e8"></div>
<div class="abs" style="left:0;top:524.4px;width:33.4px;height:9.2px;background:#f8f9fa;border-right:0.8px solid #c7c7c7"></div>
<div class="abs" style="left:967.3px;top:525.2px;width:22.8px;height:8.4px;background:#f8f9fa;border-left:0.8px solid #dadce0;border-right:0.8px solid #dadce0"></div>
<div class="abs" style="left:978.8px;top:525.2px;width:0.8px;height:8.4px;background:#dadce0"></div>
<svg class="ic" style="left:971.4px;top:527px" width="4" height="5" viewBox="0 0 4 5"><path d="M3.500 0 L0.5 2.500 L3.500 5Z" fill="#9aa0a6"/></svg>
<svg class="ic" style="left:982.6px;top:527px" width="4" height="5" viewBox="0 0 4 5"><path d="M0.5 0 L3.500 2.500 L0.5 5Z" fill="#9aa0a6"/></svg>
<div class="abs" style="left:990.3px;top:525.2px;width:8.3px;height:8.4px;background:#f1f3f4"></div>
<div class="abs" style="left:0;top:534.2px;width:1000px;height:26.8px;background:#f9fbfd"></div>
<svg class="ic" style="left:38.50px;top:542.10px" width="13.00" height="13.00" viewBox="0 0 24 24" fill="#444746" color="#444746" ><path d="M19 13h-6v6h-2v-6H5v-2h6V5h2v6h6v2z"/></svg>
<svg class="ic" style="left:67.90px;top:542.10px" width="13.00" height="13.00" viewBox="0 0 24 24" fill="#444746" color="#444746" ><path d="M3 18h18v-2H3v2zm0-5h18v-2H3v2zm0-7v2h18V6H3z"/></svg>
<div class="abs" style="left:98px;top:534.2px;width:72px;height:26.8px;background:#e1e9f7"></div>
<div class="tb" style="left:106.8px;top:541.6px;font-size:10.2px;font-weight:bold;color:#0b57d0;letter-spacing:0.1px">Arkusz1</div>
<svg class="ic" style="left:151.15px;top:541.55px" width="14.50" height="14.50" viewBox="0 0 24 24" fill="#0b57d0" color="#0b57d0" ><path d="M7 10l5 5 5-5z"/></svg>
<div class="abs" style="left:288.2px;top:127px;width:136.4px;height:138px;background:#fff;border-radius:3px;box-shadow:0 1px 2.5px rgba(60,64,67,.22),0 2px 7px 2px rgba(60,64,67,.13)"></div>
<div class="tb" style="left:300.4px;top:135px;font-size:8.3px;color:#80868b">styczeń 2024</div>
<svg class="ic" style="left:386.45px;top:137.15px" width="10.50" height="10.50" viewBox="0 0 24 24" fill="#5f6368" color="#5f6368" ><path d="M15.410 7.410L14 6l-6 6 6 6 1.410-1.410L10.830 12z"/></svg>
<svg class="ic" style="left:403.75px;top:137.15px" width="10.50" height="10.50" viewBox="0 0 24 24" fill="#5f6368" color="#5f6368" ><path d="M10 6L8.590 7.410 13.170 12l-4.580 4.590L10 18l6-6z"/></svg>
<div class="cal" style="left:295.0px;top:158.4px;color:#8f959b;font-size:7.4px">P</div>
<div class="cal" style="left:312.3px;top:158.4px;color:#8f959b;font-size:7.4px">W</div>
<div class="cal" style="left:329.5px;top:158.4px;color:#8f959b;font-size:7.4px">Ś</div>
<div class="cal" style="left:346.8px;top:158.4px;color:#8f959b;font-size:7.4px">C</div>
<div class="cal" style="left:364.0px;top:158.4px;color:#8f959b;font-size:7.4px">P</div>
<div class="cal" style="left:381.4px;top:158.4px;color:#8f959b;font-size:7.4px">S</div>
<div class="cal" style="left:398.8px;top:158.4px;color:#8f959b;font-size:7.4px">N</div>
<div class="abs" style="left:296.8px;top:171.6px;width:14.4px;height:14.4px;border-radius:50%;background:#188038"></div>
<div class="cal" style="left:295.0px;top:173.0px;color:#fff;font-weight:bold;">1</div>
<div class="cal" style="left:312.3px;top:173.0px;color:#3c4043;">2</div>
<div class="cal" style="left:329.5px;top:173.0px;color:#3c4043;">3</div>
<div class="cal" style="left:346.8px;top:173.0px;color:#3c4043;">4</div>
<div class="cal" style="left:364.0px;top:173.0px;color:#3c4043;">5</div>
<div class="cal" style="left:381.4px;top:173.0px;color:#3c4043;">6</div>
<div class="cal" style="left:398.8px;top:173.0px;color:#3c4043;">7</div>
<div class="cal" style="left:295.0px;top:187.7px;color:#3c4043;">8</div>
<div class="cal" style="left:312.3px;top:187.7px;color:#3c4043;">9</div>
<div class="cal" style="left:329.5px;top:187.7px;color:#3c4043;">10</div>
<div class="cal" style="left:346.8px;top:187.7px;color:#3c4043;">11</div>
<div class="cal" style="left:364.0px;top:187.7px;color:#3c4043;">12</div>
<div class="cal" style="left:381.4px;top:187.7px;color:#3c4043;">13</div>
<div class="cal" style="left:398.8px;top:187.7px;color:#3c4043;">14</div>
<div class="cal" style="left:295.0px;top:202.2px;color:#3c4043;">15</div>
<div class="cal" style="left:312.3px;top:202.2px;color:#3c4043;">16</div>
<div class="cal" style="left:329.5px;top:202.2px;color:#3c4043;">17</div>
<div class="cal" style="left:346.8px;top:202.2px;color:#3c4043;">18</div>
<div class="cal" style="left:364.0px;top:202.2px;color:#3c4043;">19</div>
<div class="cal" style="left:381.4px;top:202.2px;color:#3c4043;">20</div>
<div class="cal" style="left:398.8px;top:202.2px;color:#3c4043;">21</div>
<div class="cal" style="left:295.0px;top:216.8px;color:#3c4043;">22</div>
<div class="cal" style="left:312.3px;top:216.8px;color:#3c4043;">23</div>
<div class="cal" style="left:329.5px;top:216.8px;color:#3c4043;">24</div>
<div class="cal" style="left:346.8px;top:216.8px;color:#3c4043;">25</div>
<div class="cal" style="left:364.0px;top:216.8px;color:#3c4043;">26</div>
<div class="cal" style="left:381.4px;top:216.8px;color:#3c4043;">27</div>
<div class="cal" style="left:398.8px;top:216.8px;color:#3c4043;">28</div>
<div class="cal" style="left:295.0px;top:231.4px;color:#3c4043;">29</div>
<div class="cal" style="left:312.3px;top:231.4px;color:#3c4043;">30</div>
<div class="cal" style="left:329.5px;top:231.4px;color:#3c4043;">31</div>
<div class="cal" style="left:346.8px;top:231.4px;color:#9aa0a6;">1</div>
<div class="cal" style="left:364.0px;top:231.4px;color:#9aa0a6;">2</div>
<div class="cal" style="left:381.4px;top:231.4px;color:#9aa0a6;">3</div>
<div class="cal" style="left:398.8px;top:231.4px;color:#9aa0a6;">4</div>
<div class="cal" style="left:295.0px;top:246.0px;color:#9aa0a6;">5</div>
<div class="cal" style="left:312.3px;top:246.0px;color:#9aa0a6;">6</div>
<div class="cal" style="left:329.5px;top:246.0px;color:#9aa0a6;">7</div>
<div class="cal" style="left:346.8px;top:246.0px;color:#9aa0a6;">8</div>
<div class="cal" style="left:364.0px;top:246.0px;color:#9aa0a6;">9</div>
<div class="cal" style="left:381.4px;top:246.0px;color:#9aa0a6;">10</div>
<div class="cal" style="left:398.8px;top:246.0px;color:#9aa0a6;">11</div>
</body></html>
